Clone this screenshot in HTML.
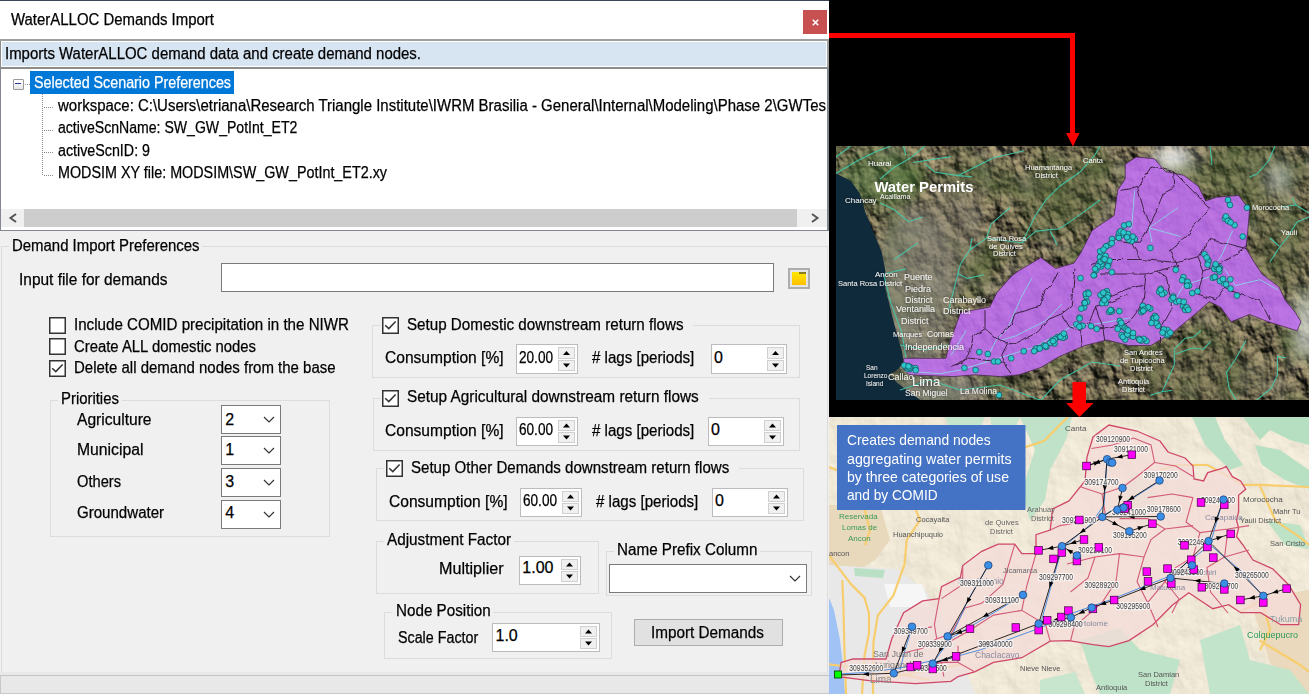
<!DOCTYPE html>
<html><head><meta charset="utf-8"><style>
html,body{margin:0;padding:0;width:1309px;height:694px;overflow:hidden;background:#000;}
body{position:relative;font-family:"Liberation Sans",sans-serif;}
.t{position:absolute;white-space:nowrap;transform-origin:0 0;-webkit-text-stroke:0.25px currentColor;}
</style></head><body>
<div id="dlg" style="position:absolute;left:0;top:0;width:829px;height:694px;overflow:hidden">
<div style="position:absolute;left:0px;top:0px;width:829px;height:694px;background:#f0f0f0"></div>
<div style="position:absolute;left:0px;top:0px;width:829px;height:39px;background:#fff"></div>
<div style="position:absolute;left:0px;top:0px;width:829px;height:1px;background:#3a4656"></div>
<div style="position:absolute;left:803px;top:10px;width:24px;height:24px;background:#c75050"></div>
<svg style="position:absolute;left:811px;top:18px" width="9" height="9"><path d="M1.8 1.8 L7.2 7.2 M7.2 1.8 L1.8 7.2" stroke="#fff" stroke-width="1.6"/></svg>
<div style="position:absolute;left:0px;top:39px;width:829px;height:2px;background:#a0a0a0"></div>
<div style="position:absolute;left:0px;top:67px;width:829px;height:2px;background:#8c8c8c"></div>
<div style="position:absolute;left:0px;top:41px;width:1px;height:26px;background:#8c8c8c"></div>
<div style="position:absolute;left:827px;top:41px;width:2px;height:26px;background:#a0a0a0"></div>
<div style="position:absolute;left:1px;top:41px;width:826px;height:26px;background:#fff"></div>
<div style="position:absolute;left:2px;top:42px;width:824px;height:24px;background:#d7e4f2"></div>
<div style="position:absolute;left:0px;top:69px;width:1px;height:162px;background:#828790"></div>
<div style="position:absolute;left:827px;top:69px;width:2px;height:162px;background:#828790"></div>
<div style="position:absolute;left:0px;top:230px;width:829px;height:1px;background:#828790"></div>
<div style="position:absolute;left:1px;top:69px;width:826px;height:161px;background:#fff"></div>
<div style="position:absolute;left:13px;top:79px;width:9px;height:9px;border:1px solid #999;background:linear-gradient(#fff,#e6e6e6);border-radius:1px"></div>
<div style="position:absolute;left:15px;top:83px;width:6px;height:1px;background:#2b3990"></div>
<div style="position:absolute;left:25px;top:84px;width:5px;height:1px;background-image:linear-gradient(90deg,#888 50%,transparent 50%);background-size:2px 1px"></div>
<div style="position:absolute;left:30px;top:71px;width:204px;height:23px;background:#0078d7"></div>
<div style="position:absolute;left:42px;top:94px;width:1px;height:82px;background-image:linear-gradient(#888 50%,transparent 50%);background-size:1px 2px"></div>
<div style="position:absolute;left:44px;top:107px;width:10px;height:1px;background-image:linear-gradient(90deg,#888 50%,transparent 50%);background-size:2px 1px"></div>
<div style="position:absolute;left:44px;top:130px;width:10px;height:1px;background-image:linear-gradient(90deg,#888 50%,transparent 50%);background-size:2px 1px"></div>
<div style="position:absolute;left:44px;top:152px;width:10px;height:1px;background-image:linear-gradient(90deg,#888 50%,transparent 50%);background-size:2px 1px"></div>
<div style="position:absolute;left:44px;top:175px;width:10px;height:1px;background-image:linear-gradient(90deg,#888 50%,transparent 50%);background-size:2px 1px"></div>
<div style="position:absolute;left:1px;top:209px;width:826px;height:18px;background:#f0f0f0"></div>
<div style="position:absolute;left:24px;top:209px;width:773px;height:18px;background:#cdcdcd"></div>
<svg style="position:absolute;left:0;top:0;overflow:visible" width="1" height="1"><path d="M16 214 L10.5 218 L16 222 M812 214 L817.5 218 L812 222" fill="none" stroke="#555" stroke-width="2"/></svg>
<div style="position:absolute;left:1px;top:246px;width:1px;height:427px;background:#dcdcdc"></div>
<div style="position:absolute;left:827px;top:246px;width:1px;height:427px;background:#dcdcdc"></div>
<div style="position:absolute;left:1px;top:672px;width:827px;height:1px;background:#dcdcdc"></div>
<div style="position:absolute;left:1px;top:246px;width:8px;height:1px;background:#dcdcdc"></div>
<div style="position:absolute;left:202px;top:246px;width:626px;height:1px;background:#dcdcdc"></div>
<div style="position:absolute;left:221px;top:263px;width:551px;height:27px;border:1px solid #7a7a7a;background:#fff"></div>
<div style="position:absolute;left:788px;top:268px;width:18px;height:17px;border:2px solid #adadad;background:#e5e5e5"></div>
<div style="position:absolute;left:792px;top:272px;width:14px;height:13px;background:linear-gradient(#ffe800,#ffc000)"></div>
<div style="position:absolute;left:799px;top:272px;width:7px;height:2px;background:#8a7a20"></div>
<svg style="position:absolute;left:49px;top:317px" width="17" height="17"><rect x="0.75" y="0.75" width="15.5" height="15.5" fill="#fff" stroke="#333" stroke-width="1.5"/></svg>
<svg style="position:absolute;left:49px;top:338px" width="17" height="17"><rect x="0.75" y="0.75" width="15.5" height="15.5" fill="#fff" stroke="#333" stroke-width="1.5"/></svg>
<svg style="position:absolute;left:49px;top:360px" width="17" height="17"><rect x="0.75" y="0.75" width="15.5" height="15.5" fill="#fff" stroke="#333" stroke-width="1.5"/><path d="M3.2 8.2 L6.8 11.6 L13.6 4.4" fill="none" stroke="#333" stroke-width="1.5"/></svg>
<div style="position:absolute;left:50px;top:400px;width:1px;height:137px;background:#dcdcdc"></div>
<div style="position:absolute;left:329px;top:400px;width:1px;height:137px;background:#dcdcdc"></div>
<div style="position:absolute;left:50px;top:536px;width:280px;height:1px;background:#dcdcdc"></div>
<div style="position:absolute;left:50px;top:400px;width:8px;height:1px;background:#dcdcdc"></div>
<div style="position:absolute;left:122px;top:400px;width:208px;height:1px;background:#dcdcdc"></div>
<div style="position:absolute;left:221px;top:405px;width:58px;height:27px;border:1px solid #7a7a7a;background:#fff"></div>
<svg style="position:absolute;left:0;top:0;overflow:visible" width="1" height="1"><path d="M264 417.0 L269 422.0 L274 417.0" fill="none" stroke="#333" stroke-width="1.2"/></svg>
<div style="position:absolute;left:221px;top:436px;width:58px;height:27px;border:1px solid #7a7a7a;background:#fff"></div>
<svg style="position:absolute;left:0;top:0;overflow:visible" width="1" height="1"><path d="M264 448.0 L269 453.0 L274 448.0" fill="none" stroke="#333" stroke-width="1.2"/></svg>
<div style="position:absolute;left:221px;top:468px;width:58px;height:27px;border:1px solid #7a7a7a;background:#fff"></div>
<svg style="position:absolute;left:0;top:0;overflow:visible" width="1" height="1"><path d="M264 480.0 L269 485.0 L274 480.0" fill="none" stroke="#333" stroke-width="1.2"/></svg>
<div style="position:absolute;left:221px;top:500px;width:58px;height:27px;border:1px solid #7a7a7a;background:#fff"></div>
<svg style="position:absolute;left:0;top:0;overflow:visible" width="1" height="1"><path d="M264 512.0 L269 517.0 L274 512.0" fill="none" stroke="#333" stroke-width="1.2"/></svg>
<div style="position:absolute;left:372px;top:325px;width:1px;height:53px;background:#dcdcdc"></div>
<div style="position:absolute;left:799px;top:325px;width:1px;height:53px;background:#dcdcdc"></div>
<div style="position:absolute;left:372px;top:377px;width:428px;height:1px;background:#dcdcdc"></div>
<div style="position:absolute;left:372px;top:325px;width:8px;height:1px;background:#dcdcdc"></div>
<div style="position:absolute;left:693px;top:325px;width:107px;height:1px;background:#dcdcdc"></div>
<svg style="position:absolute;left:382px;top:317px" width="17" height="17"><rect x="0.75" y="0.75" width="15.5" height="15.5" fill="#fff" stroke="#333" stroke-width="1.5"/><path d="M3.2 8.2 L6.8 11.6 L13.6 4.4" fill="none" stroke="#333" stroke-width="1.5"/></svg>
<div style="position:absolute;left:516px;top:344px;width:60px;height:28px;border:1px solid #bcbcc0;background:#fff"></div>
<div style="position:absolute;left:558px;top:347px;width:15px;height:10px;border:1px solid #d0d0d0;background:#f0f0f0"></div>
<div style="position:absolute;left:558px;top:360px;width:15px;height:9px;border:1px solid #d0d0d0;background:#f0f0f0"></div>
<svg style="position:absolute;left:0;top:0;overflow:visible" width="1" height="1"><path d="M563.0 355.0 L570.0 355.0 L566.5 351.0 Z M563.0 363.5 L570.0 363.5 L566.5 367.5 Z" fill="#000"/></svg>
<div style="position:absolute;left:711px;top:344px;width:74px;height:28px;border:1px solid #bcbcc0;background:#fff"></div>
<div style="position:absolute;left:767px;top:347px;width:15px;height:10px;border:1px solid #d0d0d0;background:#f0f0f0"></div>
<div style="position:absolute;left:767px;top:360px;width:15px;height:9px;border:1px solid #d0d0d0;background:#f0f0f0"></div>
<svg style="position:absolute;left:0;top:0;overflow:visible" width="1" height="1"><path d="M772.0 355.0 L779.0 355.0 L775.5 351.0 Z M772.0 363.5 L779.0 363.5 L775.5 367.5 Z" fill="#000"/></svg>
<div style="position:absolute;left:373px;top:398px;width:1px;height:53px;background:#dcdcdc"></div>
<div style="position:absolute;left:799px;top:398px;width:1px;height:53px;background:#dcdcdc"></div>
<div style="position:absolute;left:373px;top:450px;width:427px;height:1px;background:#dcdcdc"></div>
<div style="position:absolute;left:373px;top:398px;width:8px;height:1px;background:#dcdcdc"></div>
<div style="position:absolute;left:709px;top:398px;width:91px;height:1px;background:#dcdcdc"></div>
<svg style="position:absolute;left:382px;top:390px" width="17" height="17"><rect x="0.75" y="0.75" width="15.5" height="15.5" fill="#fff" stroke="#333" stroke-width="1.5"/><path d="M3.2 8.2 L6.8 11.6 L13.6 4.4" fill="none" stroke="#333" stroke-width="1.5"/></svg>
<div style="position:absolute;left:516px;top:417px;width:60px;height:27px;border:1px solid #bcbcc0;background:#fff"></div>
<div style="position:absolute;left:558px;top:420px;width:15px;height:9px;border:1px solid #d0d0d0;background:#f0f0f0"></div>
<div style="position:absolute;left:558px;top:432px;width:15px;height:9px;border:1px solid #d0d0d0;background:#f0f0f0"></div>
<svg style="position:absolute;left:0;top:0;overflow:visible" width="1" height="1"><path d="M563.0 427.5 L570.0 427.5 L566.5 423.5 Z M563.0 435.5 L570.0 435.5 L566.5 439.5 Z" fill="#000"/></svg>
<div style="position:absolute;left:708px;top:417px;width:74px;height:27px;border:1px solid #bcbcc0;background:#fff"></div>
<div style="position:absolute;left:764px;top:420px;width:15px;height:9px;border:1px solid #d0d0d0;background:#f0f0f0"></div>
<div style="position:absolute;left:764px;top:432px;width:15px;height:9px;border:1px solid #d0d0d0;background:#f0f0f0"></div>
<svg style="position:absolute;left:0;top:0;overflow:visible" width="1" height="1"><path d="M769.0 427.5 L776.0 427.5 L772.5 423.5 Z M769.0 435.5 L776.0 435.5 L772.5 439.5 Z" fill="#000"/></svg>
<div style="position:absolute;left:376px;top:468px;width:1px;height:53px;background:#dcdcdc"></div>
<div style="position:absolute;left:803px;top:468px;width:1px;height:53px;background:#dcdcdc"></div>
<div style="position:absolute;left:376px;top:520px;width:428px;height:1px;background:#dcdcdc"></div>
<div style="position:absolute;left:376px;top:468px;width:8px;height:1px;background:#dcdcdc"></div>
<div style="position:absolute;left:739px;top:468px;width:65px;height:1px;background:#dcdcdc"></div>
<svg style="position:absolute;left:386px;top:460px" width="17" height="17"><rect x="0.75" y="0.75" width="15.5" height="15.5" fill="#fff" stroke="#333" stroke-width="1.5"/><path d="M3.2 8.2 L6.8 11.6 L13.6 4.4" fill="none" stroke="#333" stroke-width="1.5"/></svg>
<div style="position:absolute;left:520px;top:488px;width:60px;height:27px;border:1px solid #bcbcc0;background:#fff"></div>
<div style="position:absolute;left:562px;top:491px;width:15px;height:9px;border:1px solid #d0d0d0;background:#f0f0f0"></div>
<div style="position:absolute;left:562px;top:503px;width:15px;height:9px;border:1px solid #d0d0d0;background:#f0f0f0"></div>
<svg style="position:absolute;left:0;top:0;overflow:visible" width="1" height="1"><path d="M567.0 498.5 L574.0 498.5 L570.5 494.5 Z M567.0 506.5 L574.0 506.5 L570.5 510.5 Z" fill="#000"/></svg>
<div style="position:absolute;left:712px;top:488px;width:74px;height:27px;border:1px solid #bcbcc0;background:#fff"></div>
<div style="position:absolute;left:768px;top:491px;width:15px;height:9px;border:1px solid #d0d0d0;background:#f0f0f0"></div>
<div style="position:absolute;left:768px;top:503px;width:15px;height:9px;border:1px solid #d0d0d0;background:#f0f0f0"></div>
<svg style="position:absolute;left:0;top:0;overflow:visible" width="1" height="1"><path d="M773.0 498.5 L780.0 498.5 L776.5 494.5 Z M773.0 506.5 L780.0 506.5 L776.5 510.5 Z" fill="#000"/></svg>
<div style="position:absolute;left:376px;top:541px;width:1px;height:53px;background:#dcdcdc"></div>
<div style="position:absolute;left:598px;top:541px;width:1px;height:53px;background:#dcdcdc"></div>
<div style="position:absolute;left:376px;top:593px;width:223px;height:1px;background:#dcdcdc"></div>
<div style="position:absolute;left:376px;top:541px;width:8px;height:1px;background:#dcdcdc"></div>
<div style="position:absolute;left:514px;top:541px;width:85px;height:1px;background:#dcdcdc"></div>
<div style="position:absolute;left:519px;top:556px;width:60px;height:27px;border:1px solid #bcbcc0;background:#fff"></div>
<div style="position:absolute;left:561px;top:559px;width:15px;height:9px;border:1px solid #d0d0d0;background:#f0f0f0"></div>
<div style="position:absolute;left:561px;top:571px;width:15px;height:9px;border:1px solid #d0d0d0;background:#f0f0f0"></div>
<svg style="position:absolute;left:0;top:0;overflow:visible" width="1" height="1"><path d="M566.0 566.5 L573.0 566.5 L569.5 562.5 Z M566.0 574.5 L573.0 574.5 L569.5 578.5 Z" fill="#000"/></svg>
<div style="position:absolute;left:606px;top:551px;width:1px;height:45px;background:#dcdcdc"></div>
<div style="position:absolute;left:811px;top:551px;width:1px;height:45px;background:#dcdcdc"></div>
<div style="position:absolute;left:606px;top:595px;width:206px;height:1px;background:#dcdcdc"></div>
<div style="position:absolute;left:606px;top:551px;width:8px;height:1px;background:#dcdcdc"></div>
<div style="position:absolute;left:760px;top:551px;width:52px;height:1px;background:#dcdcdc"></div>
<div style="position:absolute;left:609px;top:564px;width:196px;height:27px;border:1px solid #7a7a7a;background:#fff"></div>
<svg style="position:absolute;left:0;top:0;overflow:visible" width="1" height="1"><path d="M790 576.0 L795 581.0 L800 576.0" fill="none" stroke="#333" stroke-width="1.2"/></svg>
<div style="position:absolute;left:384px;top:612px;width:1px;height:47px;background:#dcdcdc"></div>
<div style="position:absolute;left:611px;top:612px;width:1px;height:47px;background:#dcdcdc"></div>
<div style="position:absolute;left:384px;top:658px;width:228px;height:1px;background:#dcdcdc"></div>
<div style="position:absolute;left:384px;top:612px;width:8px;height:1px;background:#dcdcdc"></div>
<div style="position:absolute;left:493px;top:612px;width:119px;height:1px;background:#dcdcdc"></div>
<div style="position:absolute;left:492px;top:623px;width:106px;height:27px;border:1px solid #bcbcc0;background:#fff"></div>
<div style="position:absolute;left:580px;top:626px;width:15px;height:9px;border:1px solid #d0d0d0;background:#f0f0f0"></div>
<div style="position:absolute;left:580px;top:638px;width:15px;height:9px;border:1px solid #d0d0d0;background:#f0f0f0"></div>
<svg style="position:absolute;left:0;top:0;overflow:visible" width="1" height="1"><path d="M585.0 633.5 L592.0 633.5 L588.5 629.5 Z M585.0 641.5 L592.0 641.5 L588.5 645.5 Z" fill="#000"/></svg>
<div style="position:absolute;left:634px;top:619px;width:147px;height:25px;border:1px solid #adadad;background:#e1e1e1"></div>
<div style="position:absolute;left:0px;top:672px;width:829px;height:3px;background:#e8e8e8"></div>
<div style="position:absolute;left:0px;top:675px;width:829px;height:1px;background:#c4c4c4"></div>
<div style="position:absolute;left:0px;top:676px;width:829px;height:18px;background:#e8e8e8"></div>
<div style="position:absolute;left:0px;top:693px;width:829px;height:1px;background:#c8c8c8"></div>
<div style="position:absolute;left:0px;top:675px;width:1px;height:19px;background:#c8c8c8"></div>
<div class="t" style="left:10.6px;top:11.4px;font-size:16px;line-height:18px;color:#000;transform:scaleX(0.9343);">WaterALLOC Demands Import</div>
<div class="t" style="left:4.7px;top:44.7px;font-size:16px;line-height:18px;color:#000;transform:scaleX(0.9348);">Imports WaterALLOC demand data and create demand nodes.</div>
<div class="t" style="left:34.0px;top:74.0px;font-size:16px;line-height:18px;color:#fff;transform:scaleX(0.8931);">Selected Scenario Preferences</div>
<div class="t" style="left:57.7px;top:96.7px;font-size:16px;line-height:18px;color:#000;transform:scaleX(0.9367);">workspace: C:\Users\etriana\Research Triangle Institute\IWRM Brasilia - General\Internal\Modeling\Phase 2\GWTes</div>
<div class="t" style="left:57.7px;top:119.2px;font-size:16px;line-height:18px;color:#000;transform:scaleX(0.8798);">activeScnName: SW_GW_PotInt_ET2</div>
<div class="t" style="left:57.7px;top:141.8px;font-size:16px;line-height:18px;color:#000;transform:scaleX(0.8919);">activeScnID: 9</div>
<div class="t" style="left:57.7px;top:164.4px;font-size:16px;line-height:18px;color:#000;transform:scaleX(0.8967);">MODSIM XY file: MODSIM\SW_GW_PotInt_ET2.xy</div>
<div class="t" style="left:11.9px;top:237.2px;font-size:16px;line-height:18px;color:#000;transform:scaleX(0.9334);">Demand Import Preferences</div>
<div class="t" style="left:19.3px;top:270.5px;font-size:16px;line-height:18px;color:#000;transform:scaleX(0.9651);">Input file for demands</div>
<div class="t" style="left:74.2px;top:316.2px;font-size:16px;line-height:18px;color:#000;transform:scaleX(0.9457);">Include COMID precipitation in the NIWR</div>
<div class="t" style="left:74.2px;top:337.8px;font-size:16px;line-height:18px;color:#000;transform:scaleX(0.9287);">Create ALL domestic nodes</div>
<div class="t" style="left:74.2px;top:359.2px;font-size:16px;line-height:18px;color:#000;transform:scaleX(0.9367);">Delete all demand nodes from the base</div>
<div class="t" style="left:61.1px;top:389.5px;font-size:16px;line-height:18px;color:#000;transform:scaleX(0.9304);">Priorities</div>
<div class="t" style="left:76.7px;top:410.6px;font-size:16px;line-height:18px;color:#000;transform:scaleX(0.9741);">Agriculture</div>
<div class="t" style="left:225.2px;top:410.6px;font-size:16px;line-height:18px;color:#000;">2</div>
<div class="t" style="left:76.7px;top:441.1px;font-size:16px;line-height:18px;color:#000;transform:scaleX(0.9823);">Municipal</div>
<div class="t" style="left:225.2px;top:441.1px;font-size:16px;line-height:18px;color:#000;">1</div>
<div class="t" style="left:76.7px;top:472.5px;font-size:16px;line-height:18px;color:#000;transform:scaleX(0.9164);">Others</div>
<div class="t" style="left:225.2px;top:472.5px;font-size:16px;line-height:18px;color:#000;">3</div>
<div class="t" style="left:76.7px;top:504.1px;font-size:16px;line-height:18px;color:#000;transform:scaleX(0.9416);">Groundwater</div>
<div class="t" style="left:225.2px;top:504.1px;font-size:16px;line-height:18px;color:#000;">4</div>
<div class="t" style="left:407.2px;top:315.9px;font-size:16px;line-height:18px;color:#000;transform:scaleX(0.9483);">Setup Domestic downstream return flows</div>
<div class="t" style="left:384.7px;top:349.2px;font-size:16px;line-height:18px;color:#000;transform:scaleX(0.9734);">Consumption [%]</div>
<div class="t" style="left:519.0px;top:348.6px;font-size:16px;line-height:18px;color:#000;transform:scaleX(0.8490);">20.00</div>
<div class="t" style="left:591.5px;top:349.2px;font-size:16px;line-height:18px;color:#000;transform:scaleX(0.9427);"># lags [periods]</div>
<div class="t" style="left:714.0px;top:348.6px;font-size:16px;line-height:18px;color:#000;">0</div>
<div class="t" style="left:407.2px;top:388.4px;font-size:16px;line-height:18px;color:#000;transform:scaleX(0.9591);">Setup Agricultural downstream return flows</div>
<div class="t" style="left:384.7px;top:421.7px;font-size:16px;line-height:18px;color:#000;transform:scaleX(0.9734);">Consumption [%]</div>
<div class="t" style="left:519.0px;top:421.1px;font-size:16px;line-height:18px;color:#000;transform:scaleX(0.8490);">60.00</div>
<div class="t" style="left:591.5px;top:421.7px;font-size:16px;line-height:18px;color:#000;transform:scaleX(0.9427);"># lags [periods]</div>
<div class="t" style="left:711.0px;top:421.1px;font-size:16px;line-height:18px;color:#000;">0</div>
<div class="t" style="left:411.2px;top:459.4px;font-size:16px;line-height:18px;color:#000;transform:scaleX(0.9416);">Setup Other Demands downstream return flows</div>
<div class="t" style="left:388.7px;top:492.7px;font-size:16px;line-height:18px;color:#000;transform:scaleX(0.9734);">Consumption [%]</div>
<div class="t" style="left:523.0px;top:492.1px;font-size:16px;line-height:18px;color:#000;transform:scaleX(0.8490);">60.00</div>
<div class="t" style="left:595.5px;top:492.7px;font-size:16px;line-height:18px;color:#000;transform:scaleX(0.9427);"># lags [periods]</div>
<div class="t" style="left:715.0px;top:492.1px;font-size:16px;line-height:18px;color:#000;">0</div>
<div class="t" style="left:387.2px;top:531.4px;font-size:16px;line-height:18px;color:#000;transform:scaleX(0.9551);">Adjustment Factor</div>
<div class="t" style="left:439.0px;top:559.6px;font-size:16px;line-height:18px;color:#000;transform:scaleX(1.0091);">Multiplier</div>
<div class="t" style="left:522.3px;top:559.2px;font-size:16px;line-height:18px;color:#000;">1.00</div>
<div class="t" style="left:617.1px;top:540.9px;font-size:16px;line-height:18px;color:#000;transform:scaleX(0.9512);">Name Prefix Column</div>
<div class="t" style="left:395.8px;top:602.4px;font-size:16px;line-height:18px;color:#000;transform:scaleX(0.9506);">Node Position</div>
<div class="t" style="left:398.2px;top:629.2px;font-size:16px;line-height:18px;color:#000;transform:scaleX(0.8930);">Scale Factor</div>
<div class="t" style="left:495.5px;top:626.6px;font-size:16px;line-height:18px;color:#000;">1.0</div>
<div class="t" style="left:651.2px;top:623.8px;font-size:16px;line-height:18px;color:#000;transform:scaleX(0.9546);">Import Demands</div>
</div>
<svg style="position:absolute;left:0;top:0" width="1309" height="694" viewBox="0 0 1309 694">
<defs><clipPath id="ctop"><rect x="836" y="146" width="473" height="254"/></clipPath>
<clipPath id="cbot"><rect x="829" y="417" width="480" height="277"/></clipPath>
<filter id="blur6" x="-50%" y="-50%" width="200%" height="200%"><feGaussianBlur stdDeviation="8"/></filter>
<filter id="terr" x="836" y="146" width="473" height="254" filterUnits="userSpaceOnUse" color-interpolation-filters="sRGB">
<feTurbulence type="fractalNoise" baseFrequency="0.07 0.05" numOctaves="4" seed="3" result="noise"/>
<feDiffuseLighting in="noise" surfaceScale="6" diffuseConstant="1" lighting-color="#ffffff" result="lit"><feDistantLight azimuth="300" elevation="35"/></feDiffuseLighting>
<feColorMatrix in="lit" type="matrix" values="0.68 0 0 0 0.05  0.62 0 0 0 0.05  0.47 0 0 0 0.04  0 0 0 0 1"/>
</filter>
<filter id="wig" x="-5%" y="-5%" width="110%" height="110%"><feTurbulence type="fractalNoise" baseFrequency="0.1" numOctaves="2" seed="11" result="t"/><feDisplacementMap in="SourceGraphic" in2="t" scale="4" xChannelSelector="R" yChannelSelector="G"/></filter>
<filter id="gtint" x="836" y="146" width="473" height="254" filterUnits="userSpaceOnUse" color-interpolation-filters="sRGB">
<feTurbulence type="fractalNoise" baseFrequency="0.025" numOctaves="3" seed="41" result="n"/>
<feColorMatrix in="n" type="matrix" values="0 0 0 0 0.33  0 0 0 0 0.42  0 0 0 0 0.22  0 2.6 0 0 -1.15"/>
</filter>
<filter id="wtint" x="836" y="146" width="473" height="254" filterUnits="userSpaceOnUse" color-interpolation-filters="sRGB">
<feTurbulence type="fractalNoise" baseFrequency="0.03" numOctaves="3" seed="77" result="n"/>
<feColorMatrix in="n" type="matrix" values="0 0 0 0 0.62  0 0 0 0 0.62  0 0 0 0 0.58  2.4 0 0 0 -1.25"/>
</filter>
<filter id="shadow" x="-20%" y="-20%" width="140%" height="140%"><feDropShadow dx="0" dy="0" stdDeviation="0.8" flood-color="#000" flood-opacity="0.5"/></filter>
</defs>
<g clip-path="url(#ctop)">
<rect x="836" y="146" width="473" height="254" filter="url(#terr)"/>
<rect x="836" y="146" width="473" height="254" filter="url(#gtint)" opacity="0.55"/>
<rect x="836" y="146" width="473" height="254" filter="url(#wtint)" opacity="0.45"/>
<g filter="url(#blur6)"><ellipse cx="878" cy="178" rx="42" ry="28" fill="#4f7a3e" opacity="0.5"/><ellipse cx="915" cy="290" rx="40" ry="85" fill="#8e8c80" opacity="0.6"/><ellipse cx="955" cy="225" rx="28" ry="45" fill="#8a8578" opacity="0.4"/><ellipse cx="1060" cy="195" rx="45" ry="40" fill="#4e6034" opacity="0.35"/><ellipse cx="1172" cy="158" rx="20" ry="11" fill="#f0f2f2" opacity="1"/><ellipse cx="1305" cy="325" rx="9" ry="35" fill="#e0e4e0" opacity="0.9"/><ellipse cx="1250" cy="175" rx="55" ry="30" fill="#4e6634" opacity="0.45"/><ellipse cx="1279" cy="178" rx="7" ry="13" fill="#dfe3e3" opacity="0.8"/><ellipse cx="1280" cy="250" rx="30" ry="40" fill="#58683a" opacity="0.35"/><ellipse cx="935" cy="392" rx="55" ry="14" fill="#8a8a84" opacity="0.7"/><ellipse cx="1200" cy="375" rx="70" ry="25" fill="#5a6040" opacity="0.3"/></g>
<polygon points="836.0,173.4 850.6,180.8 859.8,193.6 865.3,211.9 872.6,230.2 881.7,252.1 885.4,270.4 885.4,288.7 890.9,310.7 896.4,332.6 901.9,350.9 903.7,361.9 898.2,369.2 889.0,374.7 898.2,383.8 920.2,400.0 836.0,400.0" fill="#0f2a3b"/>
<path d="M836.0 173.5 L858.0 160.6 L875.0 152.0 L890.9 146.0" fill="none" stroke="#3fcfb0" stroke-width="1.1" opacity="0.85"/>
<path d="M836.0 157.0 L850.6 146.0" fill="none" stroke="#3fcfb0" stroke-width="1.1" opacity="0.85"/>
<path d="M880.0 179.1 L894.2 167.3 L910.7 157.8 L924.9 146.0" fill="none" stroke="#3fcfb0" stroke-width="1.1" opacity="0.85"/>
<path d="M903.6 146.0 L906.0 155.5" fill="none" stroke="#3fcfb0" stroke-width="1.1" opacity="0.85"/>
<path d="M913.1 162.5 L950.9 156.6" fill="none" stroke="#3fcfb0" stroke-width="1.1" opacity="0.85"/>
<path d="M924.9 163.7 L934.4 172.0 L958.0 175.6 L972.2 176.7" fill="none" stroke="#3fcfb0" stroke-width="1.1" opacity="0.85"/>
<path d="M958.0 175.6 L974.6 167.3 L993.5 157.8 L1024.2 150.7" fill="none" stroke="#3fcfb0" stroke-width="1.1" opacity="0.85"/>
<path d="M880.0 202.7 L894.2 209.8 L908.4 221.7 L922.6 216.9" fill="none" stroke="#3fcfb0" stroke-width="1.1" opacity="0.85"/>
<path d="M948.6 310.0 L960.4 264.2 L969.8 250.0 L986.4 238.2 L991.1 224.0 L1010.0 207.5" fill="none" stroke="#3fcfb0" stroke-width="1.1" opacity="0.85"/>
<path d="M969.8 250.0 L972.0 238.0" fill="none" stroke="#3fcfb0" stroke-width="1.1" opacity="0.85"/>
<path d="M986.4 238.2 L1021.8 242.9 L1036.0 231.1 L1059.7 228.7 L1080.0 214.6 L1100.0 200.0" fill="none" stroke="#3fcfb0" stroke-width="1.1" opacity="0.85"/>
<path d="M1021.8 242.9 L1036.0 214.6 L1045.5 200.4 L1059.7 186.2 L1080.0 172.0 L1095.0 155.0 L1100.0 146.0" fill="none" stroke="#3fcfb0" stroke-width="1.1" opacity="0.85"/>
<path d="M1050.2 231.1 L1057.3 245.3" fill="none" stroke="#3fcfb0" stroke-width="1.1" opacity="0.85"/>
<path d="M958.0 273.7 L967.5 278.4 L984.0 274.8" fill="none" stroke="#3fcfb0" stroke-width="1.1" opacity="0.85"/>
<path d="M884.7 273.7 L906.0 268.9" fill="none" stroke="#3fcfb0" stroke-width="1.1" opacity="0.85"/>
<path d="M894.2 259.5 L917.8 242.9" fill="none" stroke="#3fcfb0" stroke-width="1.1" opacity="0.85"/>
<path d="M1281.0 207.0 L1296.0 205.0 L1309.0 213.0" fill="none" stroke="#3fcfb0" stroke-width="1.1" opacity="0.85"/>
<path d="M1292.0 198.0 L1296.0 205.0" fill="none" stroke="#3fcfb0" stroke-width="1.1" opacity="0.85"/>
<path d="M1309.0 217.0 L1297.0 222.0 L1288.0 236.5 L1279.0 248.0 L1270.0 262.0" fill="none" stroke="#3fcfb0" stroke-width="1.1" opacity="0.85"/>
<path d="M1270.0 238.0 L1279.0 246.0" fill="none" stroke="#3fcfb0" stroke-width="1.1" opacity="0.85"/>
<path d="M1249.5 177.0 L1257.0 174.0 L1265.0 165.0 L1269.0 160.0 L1275.0 146.0" fill="none" stroke="#3fcfb0" stroke-width="1.1" opacity="0.85"/>
<path d="M1210.0 146.0 L1212.0 165.0" fill="none" stroke="#3fcfb0" stroke-width="1.1" opacity="0.85"/>
<path d="M1041.0 400.0 L1060.0 380.0 L1092.2 362.0 L1120.0 366.0" fill="none" stroke="#3fcfb0" stroke-width="1.1" opacity="0.85"/>
<path d="M1150.0 395.3 L1162.1 391.7 L1171.9 390.4" fill="none" stroke="#3fcfb0" stroke-width="1.1" opacity="0.85"/>
<path d="M1162.1 391.7 L1174.3 364.9 L1174.3 349.2 L1185.2 338.2 L1193.7 337.0 L1201.0 330.3" fill="none" stroke="#3fcfb0" stroke-width="1.1" opacity="0.85"/>
<path d="M1175.5 354.0 L1192.5 348.0 L1203.4 349.2 L1210.7 341.3" fill="none" stroke="#3fcfb0" stroke-width="1.1" opacity="0.85"/>
<path d="M1236.2 400.0 L1229.0 388.0 L1226.5 372.2 L1235.0 360.0 L1246.0 340.6" fill="none" stroke="#3fcfb0" stroke-width="1.1" opacity="0.85"/>
<path d="M1256.9 400.0 L1271.5 388.0 L1277.5 374.7 L1277.5 356.4 L1286.0 357.7" fill="none" stroke="#3fcfb0" stroke-width="1.1" opacity="0.85"/>
<path d="M883.6 274.0 L890.9 303.4 L901.9 332.7 L906.0 358.0" fill="none" stroke="#3fcfb0" stroke-width="1.1" opacity="0.85"/>
<path d="M900.0 345.0 L925.0 350.0 L948.0 345.0" fill="none" stroke="#3fcfb0" stroke-width="1.1" opacity="0.85"/>
<path d="M900.0 390.0 L930.0 380.0 L960.0 390.0 L1000.0 385.0 L1040.0 400.0" fill="none" stroke="#3fcfb0" stroke-width="1.1" opacity="0.85"/>
<polygon points="903.7,358.3 945.8,358.3 949.5,343.7 960.5,312.5 989.7,307.0 997.0,292.4 1011.7,275.9 1019.0,270.5 1041.0,257.6 1055.6,268.6 1073.9,263.1 1081.2,252.1 1092.2,230.2 1114.2,215.5 1117.8,189.9 1125.2,178.9 1125.2,164.3 1136.1,157.0 1154.4,158.8 1165.4,171.6 1183.7,175.3 1198.4,186.3 1205.7,200.9 1216.7,197.2 1238.6,195.4 1249.6,210.1 1247.8,230.2 1246.0,248.5 1254.0,262.0 1262.0,274.0 1279.0,287.0 1285.0,300.0 1295.0,312.0 1300.9,321.7 1297.2,330.8 1267.9,321.7 1249.6,314.4 1231.3,321.7 1220.3,307.0 1209.4,301.6 1194.7,314.4 1172.7,332.7 1150.8,345.5 1128.8,345.5 1106.9,340.0 1084.9,345.5 1059.3,356.5 1041.0,367.4 1019.0,374.8 1000.7,376.6 975.1,374.8 953.1,376.6 909.2,374.8 903.7,369.3" fill="#c070f2" fill-opacity="0.88" stroke="#4a2a50" stroke-width="0.8"/>
<path d="M1031.8 278.1 L1020.6 298.7 L1007.5 328.7 L996.2 340.0 L985.0 362.4 L960.0 370.0 L940.0 373.7 L905.0 371.0" fill="none" stroke="#8fc8e8" stroke-width="1"/>
<path d="M1061.8 304.3 L1044.9 321.2 L1015.0 336.2 L1001.8 340.0" fill="none" stroke="#8fc8e8" stroke-width="1"/>
<path d="M966.2 330.6 L951.2 354.9" fill="none" stroke="#8fc8e8" stroke-width="1"/>
<path d="M985.0 362.4 L1033.7 347.4 L1071.2 326.8 L1101.1 323.1 L1130.0 318.0" fill="none" stroke="#8fc8e8" stroke-width="1"/>
<path d="M1134.6 190.4 L1131.7 227.8 L1111.5 245.1 L1100.0 251.0" fill="none" stroke="#8fc8e8" stroke-width="1"/>
<path d="M1177.8 207.7 L1149.0 227.8 L1180.7 236.5" fill="none" stroke="#8fc8e8" stroke-width="1"/>
<path d="M1149.0 227.8 L1151.9 242.2" fill="none" stroke="#8fc8e8" stroke-width="1"/>
<path d="M1232.6 230.7 L1221.0 256.7 L1215.0 265.0" fill="none" stroke="#8fc8e8" stroke-width="1"/>
<path d="M1224.0 268.2 L1235.5 285.5 L1260.0 279.7 L1278.0 290.0" fill="none" stroke="#8fc8e8" stroke-width="1"/>
<path d="M1212.0 276.0 L1183.6 285.5 L1172.0 305.0" fill="none" stroke="#8fc8e8" stroke-width="1"/>
<g filter="url(#wig)">
<path d="M985.0 310.0 L985.0 328.7 L973.7 336.2 L968.1 354.9 L962.5 362.4 L951.2 366.2" fill="none" stroke="#3d2345" stroke-width="1"/>
<path d="M985.0 328.7 L996.2 338.1 L1007.5 343.7 L1001.8 354.9 L1005.6 366.2 L1011.2 373.7" fill="none" stroke="#3d2345" stroke-width="1"/>
<path d="M1058.0 272.5 L1052.4 283.7 L1044.9 291.2 L1039.3 306.2 L1015.0 313.7 L1011.2 325.0 L996.2 338.1" fill="none" stroke="#3d2345" stroke-width="1"/>
<path d="M1074.9 268.7 L1073.0 287.5 L1071.2 306.2 L1061.8 313.7 L1048.7 319.3 L1037.4 332.4 L1015.0 343.7 L1007.5 343.7" fill="none" stroke="#3d2345" stroke-width="1"/>
<path d="M1061.8 313.7 L1069.3 326.8 L1080.5 330.6 L1082.4 345.6" fill="none" stroke="#3d2345" stroke-width="1"/>
<path d="M1080.5 330.6 L1089.9 321.2 L1095.5 306.2 L1108.6 302.5 L1127.4 295.0" fill="none" stroke="#3d2345" stroke-width="1"/>
<path d="M1095.5 306.2 L1103.0 328.7 L1104.9 341.8" fill="none" stroke="#3d2345" stroke-width="1"/>
<path d="M951.2 366.2 L968.0 358.0 L1003.7 362.4" fill="none" stroke="#3d2345" stroke-width="1"/>
<path d="M1151.9 165.9 L1137.5 187.5 L1121.6 190.4" fill="none" stroke="#3d2345" stroke-width="1"/>
<path d="M1137.5 187.5 L1143.2 207.7 L1150.4 225.0 L1140.4 242.2 L1131.7 242.2 L1114.0 240.0" fill="none" stroke="#3d2345" stroke-width="1"/>
<path d="M1151.9 165.9 L1173.5 171.6 L1175.0 187.5 L1163.4 193.2 L1150.4 225.0" fill="none" stroke="#3d2345" stroke-width="1"/>
<path d="M1173.5 171.6 L1192.2 190.4 L1209.5 207.7" fill="none" stroke="#3d2345" stroke-width="1"/>
<path d="M1209.5 207.7 L1195.1 225.0 L1186.5 236.5 L1169.2 250.9 L1177.8 265.3" fill="none" stroke="#3d2345" stroke-width="1"/>
<path d="M1131.7 242.2 L1140.4 259.5 L1105.8 259.5 L1090.0 265.0" fill="none" stroke="#3d2345" stroke-width="1"/>
<path d="M1140.4 259.5 L1177.8 262.4 L1198.0 256.7 L1209.5 239.4 L1246.0 248.5" fill="none" stroke="#3d2345" stroke-width="1"/>
<path d="M1100.0 274.0 L1146.1 274.0 L1157.7 271.1 L1177.8 265.3" fill="none" stroke="#3d2345" stroke-width="1"/>
<path d="M1146.1 274.0 L1143.2 299.9 L1137.5 311.4 L1128.8 323.0 L1100.0 328.7" fill="none" stroke="#3d2345" stroke-width="1"/>
<path d="M1100.0 299.9 L1128.8 288.4 L1143.2 285.5" fill="none" stroke="#3d2345" stroke-width="1"/>
<path d="M1157.7 271.1 L1166.3 276.8 L1172.1 308.5 L1160.5 328.7 L1160.5 345.0" fill="none" stroke="#3d2345" stroke-width="1"/>
<path d="M1198.0 256.7 L1203.8 271.1 L1198.0 294.1 L1215.3 299.9" fill="none" stroke="#3d2345" stroke-width="1"/>
<path d="M1215.3 299.9 L1224.0 288.4 L1241.2 294.1 L1260.0 299.9 L1270.0 320.0" fill="none" stroke="#3d2345" stroke-width="1"/>
<path d="M1203.8 271.1 L1218.2 265.3 L1232.6 256.7 L1247.0 245.1" fill="none" stroke="#3d2345" stroke-width="1"/>
<path d="M1108.6 302.5 L1100.0 299.9" fill="none" stroke="#3d2345" stroke-width="1"/>
</g>
<circle cx="1084.2" cy="307.3" r="2.9" fill="#2cc6cc" stroke="#134f55" stroke-width="0.7"/>
<circle cx="1087.9" cy="292.4" r="2.9" fill="#2cc6cc" stroke="#134f55" stroke-width="0.7"/>
<circle cx="1105.9" cy="246.6" r="2.9" fill="#2cc6cc" stroke="#134f55" stroke-width="0.7"/>
<circle cx="1079.5" cy="317.7" r="2.9" fill="#2cc6cc" stroke="#134f55" stroke-width="0.7"/>
<circle cx="1112.1" cy="239.1" r="2.9" fill="#2cc6cc" stroke="#134f55" stroke-width="0.7"/>
<circle cx="1109.6" cy="244.6" r="2.9" fill="#2cc6cc" stroke="#134f55" stroke-width="0.7"/>
<circle cx="1124.2" cy="225.5" r="2.9" fill="#2cc6cc" stroke="#134f55" stroke-width="0.7"/>
<circle cx="1102.3" cy="260.1" r="2.9" fill="#2cc6cc" stroke="#134f55" stroke-width="0.7"/>
<circle cx="1085.9" cy="294.9" r="2.9" fill="#2cc6cc" stroke="#134f55" stroke-width="0.7"/>
<circle cx="1086.2" cy="296.4" r="2.9" fill="#2cc6cc" stroke="#134f55" stroke-width="0.7"/>
<circle cx="1085.8" cy="293.9" r="2.9" fill="#2cc6cc" stroke="#134f55" stroke-width="0.7"/>
<circle cx="1096.3" cy="267.8" r="2.9" fill="#2cc6cc" stroke="#134f55" stroke-width="0.7"/>
<circle cx="1121.1" cy="233.6" r="2.9" fill="#2cc6cc" stroke="#134f55" stroke-width="0.7"/>
<circle cx="1087.1" cy="302.0" r="2.9" fill="#2cc6cc" stroke="#134f55" stroke-width="0.7"/>
<circle cx="1081.3" cy="308.6" r="2.9" fill="#2cc6cc" stroke="#134f55" stroke-width="0.7"/>
<circle cx="1111.8" cy="243.2" r="2.9" fill="#2cc6cc" stroke="#134f55" stroke-width="0.7"/>
<circle cx="1120.9" cy="232.8" r="2.9" fill="#2cc6cc" stroke="#134f55" stroke-width="0.7"/>
<circle cx="1103.4" cy="256.8" r="2.9" fill="#2cc6cc" stroke="#134f55" stroke-width="0.7"/>
<circle cx="1099.7" cy="262.8" r="2.9" fill="#2cc6cc" stroke="#134f55" stroke-width="0.7"/>
<circle cx="1088.7" cy="293.6" r="2.9" fill="#2cc6cc" stroke="#134f55" stroke-width="0.7"/>
<circle cx="1084.5" cy="302.7" r="2.9" fill="#2cc6cc" stroke="#134f55" stroke-width="0.7"/>
<circle cx="1106.1" cy="246.3" r="2.9" fill="#2cc6cc" stroke="#134f55" stroke-width="0.7"/>
<circle cx="1100.7" cy="264.6" r="2.9" fill="#2cc6cc" stroke="#134f55" stroke-width="0.7"/>
<circle cx="1094.1" cy="275.2" r="2.9" fill="#2cc6cc" stroke="#134f55" stroke-width="0.7"/>
<circle cx="1079.6" cy="318.5" r="2.9" fill="#2cc6cc" stroke="#134f55" stroke-width="0.7"/>
<circle cx="1101.4" cy="253.1" r="2.9" fill="#2cc6cc" stroke="#134f55" stroke-width="0.7"/>
<circle cx="1101.3" cy="266.4" r="2.9" fill="#2cc6cc" stroke="#134f55" stroke-width="0.7"/>
<circle cx="1101.9" cy="259.7" r="2.9" fill="#2cc6cc" stroke="#134f55" stroke-width="0.7"/>
<circle cx="1101.6" cy="264.2" r="2.9" fill="#2cc6cc" stroke="#134f55" stroke-width="0.7"/>
<circle cx="1096.2" cy="270.2" r="2.9" fill="#2cc6cc" stroke="#134f55" stroke-width="0.7"/>
<circle cx="1128.8" cy="224.1" r="2.9" fill="#2cc6cc" stroke="#134f55" stroke-width="0.7"/>
<circle cx="1121.1" cy="235.5" r="2.9" fill="#2cc6cc" stroke="#134f55" stroke-width="0.7"/>
<circle cx="1118.5" cy="235.7" r="2.9" fill="#2cc6cc" stroke="#134f55" stroke-width="0.7"/>
<circle cx="1093.7" cy="275.3" r="2.9" fill="#2cc6cc" stroke="#134f55" stroke-width="0.7"/>
<circle cx="1099.9" cy="257.3" r="2.9" fill="#2cc6cc" stroke="#134f55" stroke-width="0.7"/>
<circle cx="1097.8" cy="266.4" r="2.9" fill="#2cc6cc" stroke="#134f55" stroke-width="0.7"/>
<circle cx="1100.8" cy="261.5" r="2.9" fill="#2cc6cc" stroke="#134f55" stroke-width="0.7"/>
<circle cx="1095.1" cy="268.9" r="2.9" fill="#2cc6cc" stroke="#134f55" stroke-width="0.7"/>
<circle cx="1084.9" cy="302.9" r="2.9" fill="#2cc6cc" stroke="#134f55" stroke-width="0.7"/>
<circle cx="1118.8" cy="237.7" r="2.9" fill="#2cc6cc" stroke="#134f55" stroke-width="0.7"/>
<circle cx="915.4" cy="368.1" r="2.9" fill="#2cc6cc" stroke="#134f55" stroke-width="0.7"/>
<circle cx="906.2" cy="367.3" r="2.9" fill="#2cc6cc" stroke="#134f55" stroke-width="0.7"/>
<circle cx="909.9" cy="369.1" r="2.9" fill="#2cc6cc" stroke="#134f55" stroke-width="0.7"/>
<circle cx="910.4" cy="367.1" r="2.9" fill="#2cc6cc" stroke="#134f55" stroke-width="0.7"/>
<circle cx="907.9" cy="368.6" r="2.9" fill="#2cc6cc" stroke="#134f55" stroke-width="0.7"/>
<circle cx="915.7" cy="370.2" r="2.9" fill="#2cc6cc" stroke="#134f55" stroke-width="0.7"/>
<circle cx="907.5" cy="365.9" r="2.9" fill="#2cc6cc" stroke="#134f55" stroke-width="0.7"/>
<circle cx="904.1" cy="365.4" r="2.9" fill="#2cc6cc" stroke="#134f55" stroke-width="0.7"/>
<circle cx="909.4" cy="367.6" r="2.9" fill="#2cc6cc" stroke="#134f55" stroke-width="0.7"/>
<circle cx="908.5" cy="366.3" r="2.9" fill="#2cc6cc" stroke="#134f55" stroke-width="0.7"/>
<circle cx="1081.3" cy="325.6" r="2.9" fill="#2cc6cc" stroke="#134f55" stroke-width="0.7"/>
<circle cx="1091.1" cy="326.1" r="2.9" fill="#2cc6cc" stroke="#134f55" stroke-width="0.7"/>
<circle cx="1076.4" cy="324.3" r="2.9" fill="#2cc6cc" stroke="#134f55" stroke-width="0.7"/>
<circle cx="1082.6" cy="325.8" r="2.9" fill="#2cc6cc" stroke="#134f55" stroke-width="0.7"/>
<circle cx="1096.7" cy="328.8" r="2.9" fill="#2cc6cc" stroke="#134f55" stroke-width="0.7"/>
<circle cx="1079.3" cy="326.7" r="2.9" fill="#2cc6cc" stroke="#134f55" stroke-width="0.7"/>
<circle cx="1038.2" cy="348.4" r="2.9" fill="#2cc6cc" stroke="#134f55" stroke-width="0.7"/>
<circle cx="1035.2" cy="349.8" r="2.9" fill="#2cc6cc" stroke="#134f55" stroke-width="0.7"/>
<circle cx="1064.3" cy="337.0" r="2.9" fill="#2cc6cc" stroke="#134f55" stroke-width="0.7"/>
<circle cx="1039.8" cy="348.1" r="2.9" fill="#2cc6cc" stroke="#134f55" stroke-width="0.7"/>
<circle cx="1036.0" cy="348.6" r="2.9" fill="#2cc6cc" stroke="#134f55" stroke-width="0.7"/>
<circle cx="1064.8" cy="337.0" r="2.9" fill="#2cc6cc" stroke="#134f55" stroke-width="0.7"/>
<circle cx="1057.5" cy="337.1" r="2.9" fill="#2cc6cc" stroke="#134f55" stroke-width="0.7"/>
<circle cx="1054.5" cy="343.4" r="2.9" fill="#2cc6cc" stroke="#134f55" stroke-width="0.7"/>
<circle cx="1059.5" cy="337.0" r="2.9" fill="#2cc6cc" stroke="#134f55" stroke-width="0.7"/>
<circle cx="1054.8" cy="339.1" r="2.9" fill="#2cc6cc" stroke="#134f55" stroke-width="0.7"/>
<circle cx="1046.3" cy="347.0" r="2.9" fill="#2cc6cc" stroke="#134f55" stroke-width="0.7"/>
<circle cx="1061.3" cy="335.8" r="2.9" fill="#2cc6cc" stroke="#134f55" stroke-width="0.7"/>
<circle cx="1062.9" cy="337.8" r="2.9" fill="#2cc6cc" stroke="#134f55" stroke-width="0.7"/>
<circle cx="1060.6" cy="336.7" r="2.9" fill="#2cc6cc" stroke="#134f55" stroke-width="0.7"/>
<circle cx="1052.1" cy="340.5" r="2.9" fill="#2cc6cc" stroke="#134f55" stroke-width="0.7"/>
<circle cx="1044.1" cy="345.5" r="2.9" fill="#2cc6cc" stroke="#134f55" stroke-width="0.7"/>
<circle cx="1034.2" cy="351.1" r="2.9" fill="#2cc6cc" stroke="#134f55" stroke-width="0.7"/>
<circle cx="1050.2" cy="342.8" r="2.9" fill="#2cc6cc" stroke="#134f55" stroke-width="0.7"/>
<circle cx="1063.9" cy="333.6" r="2.9" fill="#2cc6cc" stroke="#134f55" stroke-width="0.7"/>
<circle cx="1039.7" cy="348.4" r="2.9" fill="#2cc6cc" stroke="#134f55" stroke-width="0.7"/>
<circle cx="1045.5" cy="346.0" r="2.9" fill="#2cc6cc" stroke="#134f55" stroke-width="0.7"/>
<circle cx="1053.1" cy="341.1" r="2.9" fill="#2cc6cc" stroke="#134f55" stroke-width="0.7"/>
<circle cx="964.4" cy="368.0" r="2.9" fill="#2cc6cc" stroke="#134f55" stroke-width="0.7"/>
<circle cx="975.6" cy="370.0" r="2.9" fill="#2cc6cc" stroke="#134f55" stroke-width="0.7"/>
<circle cx="979.3" cy="352.1" r="2.9" fill="#2cc6cc" stroke="#134f55" stroke-width="0.7"/>
<circle cx="987.8" cy="354.0" r="2.9" fill="#2cc6cc" stroke="#134f55" stroke-width="0.7"/>
<circle cx="994.0" cy="361.5" r="2.9" fill="#2cc6cc" stroke="#134f55" stroke-width="0.7"/>
<circle cx="998.0" cy="361.5" r="2.9" fill="#2cc6cc" stroke="#134f55" stroke-width="0.7"/>
<circle cx="1011.2" cy="358.3" r="2.9" fill="#2cc6cc" stroke="#134f55" stroke-width="0.7"/>
<circle cx="1023.8" cy="351.2" r="2.9" fill="#2cc6cc" stroke="#134f55" stroke-width="0.7"/>
<circle cx="1080.5" cy="278.1" r="2.9" fill="#2cc6cc" stroke="#134f55" stroke-width="0.7"/>
<circle cx="1106.8" cy="291.2" r="2.9" fill="#2cc6cc" stroke="#134f55" stroke-width="0.7"/>
<circle cx="1109.6" cy="311.8" r="2.9" fill="#2cc6cc" stroke="#134f55" stroke-width="0.7"/>
<circle cx="1247.0" cy="207.7" r="2.9" fill="#2cc6cc" stroke="#134f55" stroke-width="0.7"/>
<circle cx="1242.7" cy="236.5" r="2.9" fill="#2cc6cc" stroke="#134f55" stroke-width="0.7"/>
<circle cx="1236.9" cy="295.6" r="2.9" fill="#2cc6cc" stroke="#134f55" stroke-width="0.7"/>
<circle cx="1150.4" cy="248.0" r="2.9" fill="#2cc6cc" stroke="#134f55" stroke-width="0.7"/>
<circle cx="999.0" cy="395.0" r="2.9" fill="#2cc6cc" stroke="#134f55" stroke-width="0.7"/>
<circle cx="1228.0" cy="200.0" r="2.9" fill="#2cc6cc" stroke="#134f55" stroke-width="0.7"/>
<circle cx="1230.0" cy="205.0" r="2.9" fill="#2cc6cc" stroke="#134f55" stroke-width="0.7"/>
<circle cx="1108.3" cy="264.1" r="2.9" fill="#2cc6cc" stroke="#134f55" stroke-width="0.7"/>
<circle cx="1111.8" cy="272.2" r="2.9" fill="#2cc6cc" stroke="#134f55" stroke-width="0.7"/>
<circle cx="1100.1" cy="251.3" r="2.9" fill="#2cc6cc" stroke="#134f55" stroke-width="0.7"/>
<circle cx="1109.5" cy="260.6" r="2.9" fill="#2cc6cc" stroke="#134f55" stroke-width="0.7"/>
<circle cx="1103.6" cy="259.1" r="2.9" fill="#2cc6cc" stroke="#134f55" stroke-width="0.7"/>
<circle cx="1103.4" cy="259.5" r="2.9" fill="#2cc6cc" stroke="#134f55" stroke-width="0.7"/>
<circle cx="1105.6" cy="256.0" r="2.9" fill="#2cc6cc" stroke="#134f55" stroke-width="0.7"/>
<circle cx="1103.5" cy="249.5" r="2.9" fill="#2cc6cc" stroke="#134f55" stroke-width="0.7"/>
<circle cx="1104.6" cy="259.2" r="2.9" fill="#2cc6cc" stroke="#134f55" stroke-width="0.7"/>
<circle cx="1107.8" cy="266.3" r="2.9" fill="#2cc6cc" stroke="#134f55" stroke-width="0.7"/>
<circle cx="1134.8" cy="239.0" r="2.9" fill="#2cc6cc" stroke="#134f55" stroke-width="0.7"/>
<circle cx="1119.2" cy="232.6" r="2.9" fill="#2cc6cc" stroke="#134f55" stroke-width="0.7"/>
<circle cx="1128.0" cy="233.8" r="2.9" fill="#2cc6cc" stroke="#134f55" stroke-width="0.7"/>
<circle cx="1131.0" cy="240.6" r="2.9" fill="#2cc6cc" stroke="#134f55" stroke-width="0.7"/>
<circle cx="1131.1" cy="238.4" r="2.9" fill="#2cc6cc" stroke="#134f55" stroke-width="0.7"/>
<circle cx="1128.8" cy="237.9" r="2.9" fill="#2cc6cc" stroke="#134f55" stroke-width="0.7"/>
<circle cx="1131.7" cy="241.1" r="2.9" fill="#2cc6cc" stroke="#134f55" stroke-width="0.7"/>
<circle cx="1132.8" cy="236.6" r="2.9" fill="#2cc6cc" stroke="#134f55" stroke-width="0.7"/>
<circle cx="1120.7" cy="231.1" r="2.9" fill="#2cc6cc" stroke="#134f55" stroke-width="0.7"/>
<circle cx="1123.5" cy="232.4" r="2.9" fill="#2cc6cc" stroke="#134f55" stroke-width="0.7"/>
<circle cx="1128.4" cy="239.6" r="2.9" fill="#2cc6cc" stroke="#134f55" stroke-width="0.7"/>
<circle cx="1127.0" cy="237.2" r="2.9" fill="#2cc6cc" stroke="#134f55" stroke-width="0.7"/>
<circle cx="1109.4" cy="311.7" r="2.9" fill="#2cc6cc" stroke="#134f55" stroke-width="0.7"/>
<circle cx="1105.6" cy="297.1" r="2.9" fill="#2cc6cc" stroke="#134f55" stroke-width="0.7"/>
<circle cx="1104.9" cy="293.1" r="2.9" fill="#2cc6cc" stroke="#134f55" stroke-width="0.7"/>
<circle cx="1112.0" cy="311.3" r="2.9" fill="#2cc6cc" stroke="#134f55" stroke-width="0.7"/>
<circle cx="1119.3" cy="311.2" r="2.9" fill="#2cc6cc" stroke="#134f55" stroke-width="0.7"/>
<circle cx="1111.1" cy="310.0" r="2.9" fill="#2cc6cc" stroke="#134f55" stroke-width="0.7"/>
<circle cx="1119.0" cy="327.2" r="2.9" fill="#2cc6cc" stroke="#134f55" stroke-width="0.7"/>
<circle cx="1108.0" cy="295.1" r="2.9" fill="#2cc6cc" stroke="#134f55" stroke-width="0.7"/>
<circle cx="1103.6" cy="299.9" r="2.9" fill="#2cc6cc" stroke="#134f55" stroke-width="0.7"/>
<circle cx="1122.5" cy="335.5" r="2.9" fill="#2cc6cc" stroke="#134f55" stroke-width="0.7"/>
<circle cx="1120.2" cy="326.1" r="2.9" fill="#2cc6cc" stroke="#134f55" stroke-width="0.7"/>
<circle cx="1100.5" cy="295.0" r="2.9" fill="#2cc6cc" stroke="#134f55" stroke-width="0.7"/>
<circle cx="1121.8" cy="325.9" r="2.9" fill="#2cc6cc" stroke="#134f55" stroke-width="0.7"/>
<circle cx="1119.8" cy="320.9" r="2.9" fill="#2cc6cc" stroke="#134f55" stroke-width="0.7"/>
<circle cx="1127.2" cy="331.0" r="2.9" fill="#2cc6cc" stroke="#134f55" stroke-width="0.7"/>
<circle cx="1120.2" cy="326.1" r="2.9" fill="#2cc6cc" stroke="#134f55" stroke-width="0.7"/>
<circle cx="1121.5" cy="335.0" r="2.9" fill="#2cc6cc" stroke="#134f55" stroke-width="0.7"/>
<circle cx="1105.8" cy="303.1" r="2.9" fill="#2cc6cc" stroke="#134f55" stroke-width="0.7"/>
<circle cx="1107.5" cy="297.5" r="2.9" fill="#2cc6cc" stroke="#134f55" stroke-width="0.7"/>
<circle cx="1124.8" cy="327.8" r="2.9" fill="#2cc6cc" stroke="#134f55" stroke-width="0.7"/>
<circle cx="1125.2" cy="339.6" r="2.9" fill="#2cc6cc" stroke="#134f55" stroke-width="0.7"/>
<circle cx="1121.3" cy="322.9" r="2.9" fill="#2cc6cc" stroke="#134f55" stroke-width="0.7"/>
<circle cx="1130.7" cy="335.6" r="2.9" fill="#2cc6cc" stroke="#134f55" stroke-width="0.7"/>
<circle cx="1117.7" cy="328.9" r="2.9" fill="#2cc6cc" stroke="#134f55" stroke-width="0.7"/>
<circle cx="1126.6" cy="329.2" r="2.9" fill="#2cc6cc" stroke="#134f55" stroke-width="0.7"/>
<circle cx="1110.6" cy="310.1" r="2.9" fill="#2cc6cc" stroke="#134f55" stroke-width="0.7"/>
<circle cx="1103.3" cy="292.7" r="2.9" fill="#2cc6cc" stroke="#134f55" stroke-width="0.7"/>
<circle cx="1102.2" cy="303.2" r="2.9" fill="#2cc6cc" stroke="#134f55" stroke-width="0.7"/>
<circle cx="1104.4" cy="300.0" r="2.9" fill="#2cc6cc" stroke="#134f55" stroke-width="0.7"/>
<circle cx="1122.8" cy="336.9" r="2.9" fill="#2cc6cc" stroke="#134f55" stroke-width="0.7"/>
<circle cx="1150.3" cy="308.6" r="2.9" fill="#2cc6cc" stroke="#134f55" stroke-width="0.7"/>
<circle cx="1157.1" cy="323.4" r="2.9" fill="#2cc6cc" stroke="#134f55" stroke-width="0.7"/>
<circle cx="1166.6" cy="335.1" r="2.9" fill="#2cc6cc" stroke="#134f55" stroke-width="0.7"/>
<circle cx="1152.9" cy="318.3" r="2.9" fill="#2cc6cc" stroke="#134f55" stroke-width="0.7"/>
<circle cx="1148.2" cy="307.3" r="2.9" fill="#2cc6cc" stroke="#134f55" stroke-width="0.7"/>
<circle cx="1143.0" cy="309.9" r="2.9" fill="#2cc6cc" stroke="#134f55" stroke-width="0.7"/>
<circle cx="1155.0" cy="315.9" r="2.9" fill="#2cc6cc" stroke="#134f55" stroke-width="0.7"/>
<circle cx="1141.4" cy="312.2" r="2.9" fill="#2cc6cc" stroke="#134f55" stroke-width="0.7"/>
<circle cx="1142.8" cy="305.8" r="2.9" fill="#2cc6cc" stroke="#134f55" stroke-width="0.7"/>
<circle cx="1157.9" cy="325.7" r="2.9" fill="#2cc6cc" stroke="#134f55" stroke-width="0.7"/>
<circle cx="1155.6" cy="322.6" r="2.9" fill="#2cc6cc" stroke="#134f55" stroke-width="0.7"/>
<circle cx="1154.0" cy="318.4" r="2.9" fill="#2cc6cc" stroke="#134f55" stroke-width="0.7"/>
<circle cx="1167.3" cy="330.0" r="2.9" fill="#2cc6cc" stroke="#134f55" stroke-width="0.7"/>
<circle cx="1168.1" cy="334.3" r="2.9" fill="#2cc6cc" stroke="#134f55" stroke-width="0.7"/>
<circle cx="1163.8" cy="329.4" r="2.9" fill="#2cc6cc" stroke="#134f55" stroke-width="0.7"/>
<circle cx="1162.5" cy="332.6" r="2.9" fill="#2cc6cc" stroke="#134f55" stroke-width="0.7"/>
<circle cx="1144.4" cy="309.4" r="2.9" fill="#2cc6cc" stroke="#134f55" stroke-width="0.7"/>
<circle cx="1170.3" cy="332.6" r="2.9" fill="#2cc6cc" stroke="#134f55" stroke-width="0.7"/>
<circle cx="1142.9" cy="311.0" r="2.9" fill="#2cc6cc" stroke="#134f55" stroke-width="0.7"/>
<circle cx="1151.4" cy="323.0" r="2.9" fill="#2cc6cc" stroke="#134f55" stroke-width="0.7"/>
<circle cx="1156.3" cy="317.5" r="2.9" fill="#2cc6cc" stroke="#134f55" stroke-width="0.7"/>
<circle cx="1143.2" cy="310.8" r="2.9" fill="#2cc6cc" stroke="#134f55" stroke-width="0.7"/>
<circle cx="1173.1" cy="296.5" r="2.9" fill="#2cc6cc" stroke="#134f55" stroke-width="0.7"/>
<circle cx="1185.9" cy="308.2" r="2.9" fill="#2cc6cc" stroke="#134f55" stroke-width="0.7"/>
<circle cx="1187.7" cy="309.3" r="2.9" fill="#2cc6cc" stroke="#134f55" stroke-width="0.7"/>
<circle cx="1176.4" cy="301.8" r="2.9" fill="#2cc6cc" stroke="#134f55" stroke-width="0.7"/>
<circle cx="1183.1" cy="306.4" r="2.9" fill="#2cc6cc" stroke="#134f55" stroke-width="0.7"/>
<circle cx="1160.7" cy="288.8" r="2.9" fill="#2cc6cc" stroke="#134f55" stroke-width="0.7"/>
<circle cx="1179.2" cy="301.1" r="2.9" fill="#2cc6cc" stroke="#134f55" stroke-width="0.7"/>
<circle cx="1185.3" cy="308.1" r="2.9" fill="#2cc6cc" stroke="#134f55" stroke-width="0.7"/>
<circle cx="1159.1" cy="291.9" r="2.9" fill="#2cc6cc" stroke="#134f55" stroke-width="0.7"/>
<circle cx="1183.7" cy="301.8" r="2.9" fill="#2cc6cc" stroke="#134f55" stroke-width="0.7"/>
<circle cx="1164.5" cy="292.8" r="2.9" fill="#2cc6cc" stroke="#134f55" stroke-width="0.7"/>
<circle cx="1185.2" cy="310.0" r="2.9" fill="#2cc6cc" stroke="#134f55" stroke-width="0.7"/>
<circle cx="1186.7" cy="307.4" r="2.9" fill="#2cc6cc" stroke="#134f55" stroke-width="0.7"/>
<circle cx="1171.4" cy="299.5" r="2.9" fill="#2cc6cc" stroke="#134f55" stroke-width="0.7"/>
<circle cx="1188.3" cy="309.8" r="2.9" fill="#2cc6cc" stroke="#134f55" stroke-width="0.7"/>
<circle cx="1162.1" cy="294.2" r="2.9" fill="#2cc6cc" stroke="#134f55" stroke-width="0.7"/>
<circle cx="1160.6" cy="289.7" r="2.9" fill="#2cc6cc" stroke="#134f55" stroke-width="0.7"/>
<circle cx="1173.2" cy="297.8" r="2.9" fill="#2cc6cc" stroke="#134f55" stroke-width="0.7"/>
<circle cx="1187.3" cy="282.9" r="2.9" fill="#2cc6cc" stroke="#134f55" stroke-width="0.7"/>
<circle cx="1183.4" cy="277.1" r="2.9" fill="#2cc6cc" stroke="#134f55" stroke-width="0.7"/>
<circle cx="1187.1" cy="284.2" r="2.9" fill="#2cc6cc" stroke="#134f55" stroke-width="0.7"/>
<circle cx="1182.1" cy="280.3" r="2.9" fill="#2cc6cc" stroke="#134f55" stroke-width="0.7"/>
<circle cx="1192.2" cy="293.1" r="2.9" fill="#2cc6cc" stroke="#134f55" stroke-width="0.7"/>
<circle cx="1187.5" cy="281.8" r="2.9" fill="#2cc6cc" stroke="#134f55" stroke-width="0.7"/>
<circle cx="1189.2" cy="285.6" r="2.9" fill="#2cc6cc" stroke="#134f55" stroke-width="0.7"/>
<circle cx="1187.0" cy="285.8" r="2.9" fill="#2cc6cc" stroke="#134f55" stroke-width="0.7"/>
<circle cx="1197.5" cy="291.3" r="2.9" fill="#2cc6cc" stroke="#134f55" stroke-width="0.7"/>
<circle cx="1175.8" cy="269.7" r="2.9" fill="#2cc6cc" stroke="#134f55" stroke-width="0.7"/>
<circle cx="1214.8" cy="269.0" r="2.9" fill="#2cc6cc" stroke="#134f55" stroke-width="0.7"/>
<circle cx="1214.8" cy="266.9" r="2.9" fill="#2cc6cc" stroke="#134f55" stroke-width="0.7"/>
<circle cx="1208.3" cy="261.6" r="2.9" fill="#2cc6cc" stroke="#134f55" stroke-width="0.7"/>
<circle cx="1219.4" cy="271.5" r="2.9" fill="#2cc6cc" stroke="#134f55" stroke-width="0.7"/>
<circle cx="1208.3" cy="260.2" r="2.9" fill="#2cc6cc" stroke="#134f55" stroke-width="0.7"/>
<circle cx="1208.3" cy="261.1" r="2.9" fill="#2cc6cc" stroke="#134f55" stroke-width="0.7"/>
<circle cx="1219.8" cy="267.7" r="2.9" fill="#2cc6cc" stroke="#134f55" stroke-width="0.7"/>
<circle cx="1204.5" cy="254.2" r="2.9" fill="#2cc6cc" stroke="#134f55" stroke-width="0.7"/>
<circle cx="1206.6" cy="257.5" r="2.9" fill="#2cc6cc" stroke="#134f55" stroke-width="0.7"/>
<circle cx="1214.3" cy="268.7" r="2.9" fill="#2cc6cc" stroke="#134f55" stroke-width="0.7"/>
<circle cx="1216.9" cy="267.4" r="2.9" fill="#2cc6cc" stroke="#134f55" stroke-width="0.7"/>
<circle cx="1218.9" cy="268.7" r="2.9" fill="#2cc6cc" stroke="#134f55" stroke-width="0.7"/>
<circle cx="1230.4" cy="279.3" r="2.9" fill="#2cc6cc" stroke="#134f55" stroke-width="0.7"/>
<circle cx="1219.0" cy="269.3" r="2.9" fill="#2cc6cc" stroke="#134f55" stroke-width="0.7"/>
<circle cx="1207.6" cy="264.6" r="2.9" fill="#2cc6cc" stroke="#134f55" stroke-width="0.7"/>
<circle cx="1215.6" cy="264.2" r="2.9" fill="#2cc6cc" stroke="#134f55" stroke-width="0.7"/>
<circle cx="1223.7" cy="283.1" r="2.9" fill="#2cc6cc" stroke="#134f55" stroke-width="0.7"/>
<circle cx="1212.8" cy="277.9" r="2.9" fill="#2cc6cc" stroke="#134f55" stroke-width="0.7"/>
<circle cx="1219.9" cy="281.0" r="2.9" fill="#2cc6cc" stroke="#134f55" stroke-width="0.7"/>
<circle cx="1226.1" cy="284.4" r="2.9" fill="#2cc6cc" stroke="#134f55" stroke-width="0.7"/>
<circle cx="1215.0" cy="276.9" r="2.9" fill="#2cc6cc" stroke="#134f55" stroke-width="0.7"/>
<circle cx="1230.6" cy="288.6" r="2.9" fill="#2cc6cc" stroke="#134f55" stroke-width="0.7"/>
<circle cx="1214.7" cy="277.0" r="2.9" fill="#2cc6cc" stroke="#134f55" stroke-width="0.7"/>
<circle cx="1223.0" cy="279.0" r="2.9" fill="#2cc6cc" stroke="#134f55" stroke-width="0.7"/>
<circle cx="1228.4" cy="219.8" r="2.9" fill="#2cc6cc" stroke="#134f55" stroke-width="0.7"/>
<circle cx="1234.6" cy="225.1" r="2.9" fill="#2cc6cc" stroke="#134f55" stroke-width="0.7"/>
<circle cx="1225.0" cy="218.7" r="2.9" fill="#2cc6cc" stroke="#134f55" stroke-width="0.7"/>
<circle cx="1225.9" cy="216.4" r="2.9" fill="#2cc6cc" stroke="#134f55" stroke-width="0.7"/>
<circle cx="1227.9" cy="220.9" r="2.9" fill="#2cc6cc" stroke="#134f55" stroke-width="0.7"/>
<circle cx="1230.6" cy="222.4" r="2.9" fill="#2cc6cc" stroke="#134f55" stroke-width="0.7"/>
<circle cx="1129.5" cy="333.0" r="2.9" fill="#2cc6cc" stroke="#134f55" stroke-width="0.7"/>
<circle cx="1146.5" cy="341.1" r="2.9" fill="#2cc6cc" stroke="#134f55" stroke-width="0.7"/>
<circle cx="1143.7" cy="338.8" r="2.9" fill="#2cc6cc" stroke="#134f55" stroke-width="0.7"/>
<circle cx="1141.2" cy="340.6" r="2.9" fill="#2cc6cc" stroke="#134f55" stroke-width="0.7"/>
<circle cx="1127.3" cy="334.4" r="2.9" fill="#2cc6cc" stroke="#134f55" stroke-width="0.7"/>
<circle cx="1133.0" cy="336.8" r="2.9" fill="#2cc6cc" stroke="#134f55" stroke-width="0.7"/>
<circle cx="1138.8" cy="338.8" r="2.9" fill="#2cc6cc" stroke="#134f55" stroke-width="0.7"/>
<circle cx="1139.6" cy="339.7" r="2.9" fill="#2cc6cc" stroke="#134f55" stroke-width="0.7"/>
<circle cx="1128.0" cy="330.4" r="2.9" fill="#2cc6cc" stroke="#134f55" stroke-width="0.7"/>
<circle cx="1133.1" cy="333.0" r="2.9" fill="#2cc6cc" stroke="#134f55" stroke-width="0.7"/>
<text x="868" y="166" font-size="8" fill="#f4f4f4" font-family="Liberation Sans" filter="url(#shadow)">Huaral</text>
<text x="845" y="203" font-size="8" fill="#f4f4f4" font-family="Liberation Sans" filter="url(#shadow)">Chancay</text>
<text x="875" y="277" font-size="8" fill="#f4f4f4" font-family="Liberation Sans" filter="url(#shadow)">Ancon</text>
<text x="838" y="286" font-size="7.5" fill="#f4f4f4" font-family="Liberation Sans" filter="url(#shadow)">Santa Rosa District</text>
<text x="904" y="280" font-size="9" fill="#f4f4f4" font-family="Liberation Sans" filter="url(#shadow)">Puente</text>
<text x="905" y="292" font-size="9" fill="#f4f4f4" font-family="Liberation Sans" filter="url(#shadow)">Piedra</text>
<text x="905" y="303" font-size="9" fill="#f4f4f4" font-family="Liberation Sans" filter="url(#shadow)">District</text>
<text x="896" y="312" font-size="9" fill="#f4f4f4" font-family="Liberation Sans" filter="url(#shadow)">Ventanilla</text>
<text x="901" y="324" font-size="9" fill="#f4f4f4" font-family="Liberation Sans" filter="url(#shadow)">District</text>
<text x="943" y="303" font-size="9" fill="#f4f4f4" font-family="Liberation Sans" filter="url(#shadow)">Carabayllo</text>
<text x="943" y="314" font-size="9" fill="#f4f4f4" font-family="Liberation Sans" filter="url(#shadow)">District</text>
<text x="927" y="337" font-size="8.5" fill="#f4f4f4" font-family="Liberation Sans" filter="url(#shadow)">Comas</text>
<text x="893" y="337" font-size="7.5" fill="#f4f4f4" font-family="Liberation Sans" filter="url(#shadow)">Marques</text>
<text x="905" y="350" font-size="9" fill="#f4f4f4" font-family="Liberation Sans" filter="url(#shadow)">Independencia</text>
<text x="888" y="380" font-size="9" fill="#f4f4f4" font-family="Liberation Sans" filter="url(#shadow)">Callao</text>
<text x="912" y="386" font-size="13" fill="#f4f4f4" font-family="Liberation Sans" filter="url(#shadow)">Lima</text>
<text x="905" y="396" font-size="8.5" fill="#f4f4f4" font-family="Liberation Sans" filter="url(#shadow)">San Miguel</text>
<text x="960" y="394" font-size="8.5" fill="#f4f4f4" font-family="Liberation Sans" filter="url(#shadow)">La Molina</text>
<text x="1025" y="170" font-size="7.5" fill="#f4f4f4" font-family="Liberation Sans" filter="url(#shadow)">Huamantanga</text>
<text x="1035" y="178" font-size="7.5" fill="#f4f4f4" font-family="Liberation Sans" filter="url(#shadow)">District</text>
<text x="1083" y="163" font-size="7.5" fill="#f4f4f4" font-family="Liberation Sans" filter="url(#shadow)">Canta</text>
<text x="987" y="241" font-size="7.5" fill="#f4f4f4" font-family="Liberation Sans" filter="url(#shadow)">Santa Rosa</text>
<text x="989" y="249" font-size="7.5" fill="#f4f4f4" font-family="Liberation Sans" filter="url(#shadow)">de Quives</text>
<text x="993" y="256" font-size="7.5" fill="#f4f4f4" font-family="Liberation Sans" filter="url(#shadow)">District</text>
<text x="1124" y="355" font-size="7.5" fill="#f4f4f4" font-family="Liberation Sans" filter="url(#shadow)">San Andres</text>
<text x="1120" y="363" font-size="7.5" fill="#f4f4f4" font-family="Liberation Sans" filter="url(#shadow)">de Tupicocha</text>
<text x="1130" y="371" font-size="7.5" fill="#f4f4f4" font-family="Liberation Sans" filter="url(#shadow)">District</text>
<text x="1118" y="384" font-size="7.5" fill="#f4f4f4" font-family="Liberation Sans" filter="url(#shadow)">Antioquia</text>
<text x="1122" y="392" font-size="7.5" fill="#f4f4f4" font-family="Liberation Sans" filter="url(#shadow)">District</text>
<text x="1252" y="210" font-size="7.5" fill="#f4f4f4" font-family="Liberation Sans" filter="url(#shadow)">Morococha</text>
<text x="1281" y="235" font-size="7.5" fill="#f4f4f4" font-family="Liberation Sans" filter="url(#shadow)">Yauli</text>
<text x="866" y="370" font-size="6.5" fill="#f4f4f4" font-family="Liberation Sans" filter="url(#shadow)">San</text>
<text x="864" y="378" font-size="6.5" fill="#f4f4f4" font-family="Liberation Sans" filter="url(#shadow)">Lorenzo</text>
<text x="866" y="386" font-size="6.5" fill="#f4f4f4" font-family="Liberation Sans" filter="url(#shadow)">Island</text>
<text x="880" y="199" font-size="7" fill="#f4f4f4" font-family="Liberation Sans" filter="url(#shadow)">Acaillama</text>
<text x="874.4" y="191.7" font-size="15.2" font-weight="bold" fill="#fff" font-family="Liberation Sans" textLength="99" lengthAdjust="spacingAndGlyphs">Water Permits</text>
</g></svg>
<svg style="position:absolute;left:0;top:0" width="1309" height="694" viewBox="0 0 1309 694">
<defs><filter id="halo" x="-10%" y="-30%" width="120%" height="160%"><feMorphology in="SourceAlpha" operator="dilate" radius="0.8" result="d"/><feFlood flood-color="#fff" flood-opacity="0.85"/><feComposite in2="d" operator="in" result="w"/><feMerge><feMergeNode in="w"/><feMergeNode in="SourceGraphic"/></feMerge></filter></defs>
<g clip-path="url(#cbot)">
<defs><filter id="terr2" x="829" y="417" width="480" height="277" filterUnits="userSpaceOnUse" color-interpolation-filters="sRGB"><feTurbulence type="fractalNoise" baseFrequency="0.04 0.03" numOctaves="4" seed="21" result="noise"/><feDiffuseLighting in="noise" surfaceScale="4" diffuseConstant="1" lighting-color="#ffffff"><feDistantLight azimuth="300" elevation="50"/></feDiffuseLighting><feColorMatrix type="matrix" values="0.16 0 0 0 0.82  0.16 0 0 0 0.79  0.16 0 0 0 0.72  0 0 0 0 1"/></filter></defs>
<rect x="829" y="417" width="480" height="277" filter="url(#terr2)"/>
<path d="M829 505 L880 505 L890 540 L875 560 L850 575 L829 570 Z" fill="#e8d8bc"/>
<path d="M1250 600 L1309 590 L1309 694 L1280 694 Z" fill="#ead9bd"/>
<path d="M829 565 L860 567 L896 569 L925 590 L950 630 L975 694 L829 694 Z" fill="#e8e8e8"/>
<path d="M884 584 L922 584 L930 607 L890 607 Z" fill="#f6f6f6"/>
<path d="M1020 417 L1072 417 L1066 440 L1050 470 L1045 500 L1030 520 L1022 490 L1035 450 Z" fill="#bfe2c8"/>
<path d="M990 417 L1020 417 L1010 440 L995 445 Z" fill="#c5e5cc"/>
<path d="M1192 417 L1215 417 L1225 440 L1243 465 L1230 470 L1205 445 Z" fill="#b9e0c4"/>
<path d="M1243 417 L1309 417 L1309 445 L1290 440 L1270 430 L1260 440 Z" fill="#b5dfc0"/>
<path d="M1255 445 L1280 450 L1309 470 L1309 489 L1285 480 L1262 465 Z" fill="#b8e0c2"/>
<path d="M1267 521 L1300 525 L1309 549 L1285 545 Z" fill="#bde2c6"/>
<path d="M1080 640 L1120 628 L1140 650 L1180 660 L1170 694 L1100 694 L1090 670 Z" fill="#bfe3c8"/>
<path d="M1200 640 L1240 625 L1250 660 L1290 670 L1309 694 L1210 694 Z" fill="#c2e4ca"/>
<path d="M1040 680 L1075 672 L1085 694 L1040 694 Z" fill="#c8e6cd"/>
<path d="M945 417 L985 417 L975 440 L955 445 Z" fill="#c5e5cc"/>
<path d="M1130 470 L1150 480 L1160 520 L1140 530 L1125 500 Z" fill="#d2e4cc" opacity="0.7"/>
<path d="M1060 540 L1090 545 L1085 575 L1062 570 Z" fill="#d2e4cc" opacity="0.7"/>
<path d="M854 568 L885 570 L883 578 L855 576 Z" fill="#b9e0c4"/>
<path d="M829 598 L834 610 L840 640 L843 665 L845 694 L829 694 Z" fill="#a0c2f5"/>
<path d="M1067.9 417.0 L1044.0 441.0 L1020.0 449.0 L1005.0 470.0" fill="none" stroke="#f7cd6e" stroke-width="2.2"/>
<path d="M1160.0 470.0 L1175.7 465.0 L1207.6 465.0 L1243.5 484.9 L1259.5 484.9 L1309.0 487.0" fill="none" stroke="#f7cd6e" stroke-width="2.2"/>
<path d="M1259.5 484.9 L1275.5 520.8 L1299.4 536.8 L1309.0 545.0" fill="none" stroke="#f7cd6e" stroke-width="2.2"/>
<path d="M1259.5 640.6 L1299.4 664.5 L1309.0 672.0" fill="none" stroke="#f7cd6e" stroke-width="2.2"/>
<path d="M829.0 467.0 L850.0 475.0 L862.0 500.0 L870.0 530.0 L865.0 545.0" fill="none" stroke="#f7cd6e" stroke-width="2.2"/>
<path d="M829.0 555.5 L851.2 584.4 L864.5 597.7 L869.0 613.3 L869.0 633.2 L864.5 655.5 L862.0 694.0" fill="none" stroke="#f7cd6e" stroke-width="2.2"/>
<path d="M842.3 580.0 L843.4 606.6 L844.5 651.0 L846.0 694.0" fill="none" stroke="#f7cd6e" stroke-width="2.2"/>
<path d="M906.7 540.0 L904.5 564.4 L893.4 595.5 L877.8 615.5 L873.4 642.1 L873.0 694.0" fill="none" stroke="#f7cd6e" stroke-width="2.2"/>
<path d="M829.0 664.3 L860.0 668.0 L895.6 673.2 L930.0 680.0" fill="none" stroke="#f7cd6e" stroke-width="2.2"/>
<path d="M884.5 677.7 L920.0 672.0 L962.2 664.3" fill="none" stroke="#f7cd6e" stroke-width="2.2"/>
<path d="M912.0 500.0 L920.0 520.0 L906.7 540.0" fill="none" stroke="#f7cd6e" stroke-width="2.2"/>
<path d="M1240.0 612.0 L1262.0 600.0 L1270.0 630.0 L1260.0 650.0" fill="none" stroke="#f7cd6e" stroke-width="2.2"/>
<polygon points="1069.0,500.9 1085.0,480.9 1087.0,457.0 1093.0,437.0 1108.9,425.0 1136.9,431.0 1160.0,441.0 1168.0,452.0 1185.0,458.0 1193.0,466.0 1194.0,479.0 1203.6,480.9 1207.7,472.6 1222.1,468.5 1226.2,466.4 1232.4,476.7 1240.6,480.9 1245.8,489.1 1238.6,495.3 1238.6,511.7 1236.5,520.0 1238.6,528.2 1236.5,536.5 1242.7,544.7 1253.0,560.0 1272.7,568.8 1288.6,584.7 1300.6,604.7 1298.6,624.7 1280.7,624.7 1260.7,612.7 1240.7,612.7 1228.7,604.7 1212.8,608.7 1200.8,600.7 1188.8,592.7 1172.8,604.7 1152.9,624.7 1128.9,640.6 1108.9,646.6 1093.0,644.6 1069.0,640.6 1050.2,641.1 1021.8,657.7 993.5,662.4 974.6,671.8 958.0,676.6 950.9,681.3 915.5,683.7 868.9,680.6 839.0,676.6 841.0,662.6 853.0,659.0 886.0,659.0 891.8,638.7 903.6,612.7 922.6,600.9 939.1,598.6 941.5,586.7 960.4,577.3 962.7,565.5 981.7,551.3 998.2,544.2 1014.8,544.2 1021.8,553.6 1036.0,553.6 1036.0,534.7 1050.2,530.0 1052.6,508.9" fill="#f4dcd8" fill-opacity="0.78" stroke="#cf4868" stroke-width="1.3"/>
<path d="M1014.8 544.2 L1002.9 584.4 L981.7 603.3 L965.1 608.0 L950.9 634.0 L936.7 638.7" fill="none" stroke="#d35a78" stroke-width="1.1"/>
<path d="M939.1 598.6 L934.4 624.6 L936.7 638.7" fill="none" stroke="#d35a78" stroke-width="1.1"/>
<path d="M1036.0 553.6 L1026.6 586.7 L1021.8 610.4 L993.5 615.1 L967.5 631.7 L950.9 641.1" fill="none" stroke="#d35a78" stroke-width="1.1"/>
<path d="M1021.8 610.4 L1045.5 624.6 L1050.2 641.1" fill="none" stroke="#d35a78" stroke-width="1.1"/>
<path d="M917.8 629.3 L932.0 626.9" fill="none" stroke="#d35a78" stroke-width="1.1"/>
<path d="M903.6 653.0 L922.6 648.2 L936.7 638.7" fill="none" stroke="#d35a78" stroke-width="1.1"/>
<path d="M958.0 645.8 L958.0 662.4 L974.6 671.8" fill="none" stroke="#d35a78" stroke-width="1.1"/>
<path d="M915.5 669.5 L941.5 662.4 L958.0 662.4" fill="none" stroke="#d35a78" stroke-width="1.1"/>
<path d="M941.5 662.4 L943.8 676.6" fill="none" stroke="#d35a78" stroke-width="1.1"/>
<path d="M962.7 565.5 L962.7 584.4 L941.5 598.6" fill="none" stroke="#d35a78" stroke-width="1.1"/>
<path d="M1091.5 448.5 L1112.5 445.0 L1133.6 438.0 L1151.0 445.0 L1154.6 462.5 L1137.0 476.5 L1123.0 487.0" fill="none" stroke="#d35a78" stroke-width="1.1"/>
<path d="M1154.6 462.5 L1175.6 466.0 L1193.0 476.5" fill="none" stroke="#d35a78" stroke-width="1.1"/>
<path d="M1081.0 487.0 L1102.0 494.0 L1123.0 487.0" fill="none" stroke="#d35a78" stroke-width="1.1"/>
<path d="M1102.0 494.0 L1105.5 515.0" fill="none" stroke="#d35a78" stroke-width="1.1"/>
<path d="M1147.6 497.6 L1172.0 494.0 L1193.0 497.6" fill="none" stroke="#d35a78" stroke-width="1.1"/>
<path d="M1119.5 518.6 L1147.6 518.6 L1165.0 529.0 L1193.0 525.6" fill="none" stroke="#d35a78" stroke-width="1.1"/>
<path d="M1060.0 525.6 L1081.0 522.0 L1105.5 515.0" fill="none" stroke="#d35a78" stroke-width="1.1"/>
<path d="M1067.0 564.0 L1095.0 557.0 L1119.5 553.6 L1144.0 557.0 L1151.0 539.6 L1165.0 529.0" fill="none" stroke="#d35a78" stroke-width="1.1"/>
<path d="M1095.0 557.0 L1088.0 578.0 L1070.5 592.0" fill="none" stroke="#d35a78" stroke-width="1.1"/>
<path d="M1119.5 553.6 L1116.0 581.6 L1102.0 602.6" fill="none" stroke="#d35a78" stroke-width="1.1"/>
<path d="M1144.0 557.0 L1137.0 581.6 L1147.6 602.6 L1158.0 627.0" fill="none" stroke="#d35a78" stroke-width="1.1"/>
<path d="M1102.0 602.6 L1074.0 627.0 L1070.5 641.0" fill="none" stroke="#d35a78" stroke-width="1.1"/>
<path d="M1193.0 497.6 L1186.0 522.0 L1200.0 532.6 L1228.0 529.0 L1249.0 525.6" fill="none" stroke="#d35a78" stroke-width="1.1"/>
<path d="M1200.0 532.6 L1193.0 557.0 L1175.6 567.6 L1165.0 581.6 L1179.0 599.0 L1172.0 613.0" fill="none" stroke="#d35a78" stroke-width="1.1"/>
<path d="M1228.0 529.0 L1224.6 557.0 L1207.0 567.6 L1210.6 592.0 L1228.0 613.0" fill="none" stroke="#d35a78" stroke-width="1.1"/>
<path d="M1224.6 557.0 L1249.0 550.0" fill="none" stroke="#d35a78" stroke-width="1.1"/>
<path d="M1147.6 602.6 L1165.0 581.6" fill="none" stroke="#d35a78" stroke-width="1.1"/>
<path d="M1050.2 530.0 L1060.0 525.6" fill="none" stroke="#d35a78" stroke-width="1.1"/>
<path d="M841.0 674.0 L870.0 672.0 L900.0 668.0 L935.0 660.0 L950.0 640.0 L968.0 600.0 L988.0 566.0" fill="none" stroke="#4f8ee0" stroke-width="1"/>
<path d="M948.0 640.0 L990.0 615.0 L1023.0 595.0" fill="none" stroke="#4f8ee0" stroke-width="1"/>
<path d="M935.0 662.0 L980.0 650.0 L1040.0 628.0 L1070.0 614.0 L1110.0 600.0 L1170.0 576.0 L1210.0 545.0 L1220.0 510.0 L1223.0 500.0" fill="none" stroke="#4f8ee0" stroke-width="1"/>
<path d="M1040.0 626.0 L1050.0 590.0 L1062.0 548.0 L1090.0 525.0 L1104.0 505.0 L1107.0 460.0" fill="none" stroke="#4f8ee0" stroke-width="1"/>
<path d="M1104.0 515.0 L1130.0 500.0 L1160.0 481.0" fill="none" stroke="#4f8ee0" stroke-width="1"/>
<path d="M1210.0 545.0 L1240.0 570.0 L1263.0 596.0" fill="none" stroke="#4f8ee0" stroke-width="1"/>
<path d="M912.0 628.0 L905.0 650.0 L900.0 670.0" fill="none" stroke="#4f8ee0" stroke-width="1"/>
<text x="1065" y="431" font-size="8" fill="#555" font-family="Liberation Sans">Canta</text>
<text x="1027" y="512" font-size="7.5" fill="#666" font-family="Liberation Sans">Arahuay</text>
<text x="1031" y="521" font-size="7.5" fill="#666" font-family="Liberation Sans">District</text>
<text x="985" y="525" font-size="7.5" fill="#666" font-family="Liberation Sans">de Quives</text>
<text x="990" y="534" font-size="7.5" fill="#666" font-family="Liberation Sans">District</text>
<text x="916" y="522" font-size="7.5" fill="#555" font-family="Liberation Sans">Cocayalta</text>
<text x="893" y="537" font-size="7.5" fill="#555" font-family="Liberation Sans">Huanchipuquio</text>
<text x="839" y="519" font-size="8" fill="#3a9a5a" font-family="Liberation Sans">Reservada</text>
<text x="842" y="530" font-size="8" fill="#3a9a5a" font-family="Liberation Sans">Lomas de</text>
<text x="848" y="541" font-size="8" fill="#3a9a5a" font-family="Liberation Sans">Ancon</text>
<text x="829" y="556" font-size="7.5" fill="#555" font-family="Liberation Sans">ancon</text>
<text x="1003" y="573" font-size="7.5" fill="#666" font-family="Liberation Sans">Jicamarca</text>
<text x="958" y="584" font-size="8.5" fill="#8a8aa0" font-family="Liberation Sans">San Antonio</text>
<text x="873" y="657" font-size="9" fill="#777" font-family="Liberation Sans">San Juan de</text>
<text x="875" y="668" font-size="9" fill="#777" font-family="Liberation Sans">Lurigancho</text>
<text x="975" y="658" font-size="8.5" fill="#8a8aa0" font-family="Liberation Sans">Chaclacayo</text>
<text x="1020" y="671" font-size="7.5" fill="#555" font-family="Liberation Sans">Nieve Nieve</text>
<text x="1138" y="677" font-size="7.5" fill="#555" font-family="Liberation Sans">San Damian</text>
<text x="1145" y="686" font-size="7.5" fill="#555" font-family="Liberation Sans">District</text>
<text x="1096" y="690" font-size="7.5" fill="#555" font-family="Liberation Sans">Antioquia</text>
<text x="1243" y="502" font-size="8" fill="#555" font-family="Liberation Sans">Morococha</text>
<text x="1273" y="514" font-size="7.5" fill="#555" font-family="Liberation Sans">Mahr Tu</text>
<text x="1240" y="523" font-size="7.5" fill="#555" font-family="Liberation Sans">Yauli District</text>
<text x="1270" y="546" font-size="7.5" fill="#555" font-family="Liberation Sans">San Cristo</text>
<text x="1270" y="622" font-size="9" fill="#8aa0a0" font-family="Liberation Sans">Tukuma</text>
<text x="1247" y="638" font-size="9" fill="#2a9a5a" font-family="Liberation Sans">Colquepucro</text>
<text x="870" y="683" font-size="10" fill="#888" font-family="Liberation Sans">Lima</text>
<text x="1205" y="520" font-size="8" fill="#8a8aa0" font-family="Liberation Sans">Casapalca</text>
<text x="1180" y="575" font-size="8" fill="#8a8aa0" font-family="Liberation Sans">Huarochiri</text>
<text x="1055" y="626" font-size="8" fill="#8a8aa0" font-family="Liberation Sans">San Bartolome</text>
<text x="1150" y="590" font-size="8" fill="#8a8aa0" font-family="Liberation Sans">Matucana</text>
<path d="M893.8 673.3 L838.0 675.0" stroke="#111" stroke-width="0.9"/>
<polygon points="862.9,674.2 868.8,671.8 869.0,676.3" fill="#000"/>
<path d="M932.8 663.6 L893.8 673.3" stroke="#111" stroke-width="0.9"/>
<polygon points="910.4,669.2 915.7,665.5 916.8,669.9" fill="#000"/>
<path d="M912.0 626.7 L893.8 673.3" stroke="#111" stroke-width="0.9"/>
<polygon points="901.8,652.8 901.9,646.4 906.1,648.0" fill="#000"/>
<path d="M947.6 636.4 L932.8 663.6" stroke="#111" stroke-width="0.9"/>
<polygon points="938.8,652.6 939.7,646.3 943.6,648.4" fill="#000"/>
<path d="M988.3 565.3 L947.6 636.4" stroke="#111" stroke-width="0.9"/>
<polygon points="966.5,603.5 967.5,597.1 971.4,599.4" fill="#000"/>
<path d="M1023.0 594.9 L947.6 636.4" stroke="#111" stroke-width="0.9"/>
<polygon points="982.7,617.1 986.8,612.2 989.0,616.2" fill="#000"/>
<path d="M970.0 628.8 L947.6 636.4" stroke="#111" stroke-width="0.9"/>
<polygon points="956.0,633.6 960.9,629.5 962.4,633.8" fill="#000"/>
<path d="M956.1 656.4 L932.8 663.6" stroke="#111" stroke-width="0.9"/>
<polygon points="941.6,660.9 946.7,657.0 948.0,661.3" fill="#000"/>
<path d="M1038.7 623.7 L932.8 663.6" stroke="#111" stroke-width="0.9"/>
<polygon points="982.9,644.7 987.8,640.5 989.4,644.7" fill="#000"/>
<path d="M1062.0 546.2 L1038.7 623.7" stroke="#111" stroke-width="0.9"/>
<polygon points="1049.5,587.8 1049.1,581.4 1053.4,582.7" fill="#000"/>
<path d="M1076.9 555.5 L1062.0 546.2" stroke="#111" stroke-width="0.9"/>
<polygon points="1066.9,549.3 1073.2,550.5 1070.8,554.3" fill="#000"/>
<path d="M1062.0 546.2 L1038.5 550.4" stroke="#111" stroke-width="0.9"/>
<polygon points="1047.3,548.8 1052.8,545.6 1053.6,550.0" fill="#000"/>
<path d="M1102.3 516.9 L1062.0 546.2" stroke="#111" stroke-width="0.9"/>
<polygon points="1079.7,533.3 1083.3,528.0 1085.9,531.6" fill="#000"/>
<path d="M1084.0 539.5 L1062.0 546.2" stroke="#111" stroke-width="0.9"/>
<polygon points="1070.1,543.7 1075.2,539.8 1076.5,544.1" fill="#000"/>
<path d="M1107.1 459.2 L1102.3 516.9" stroke="#111" stroke-width="0.9"/>
<polygon points="1104.5,491.0 1102.7,484.9 1107.2,485.2" fill="#000"/>
<path d="M1131.8 454.7 L1107.1 459.2" stroke="#111" stroke-width="0.9"/>
<polygon points="1116.5,457.5 1122.0,454.2 1122.8,458.6" fill="#000"/>
<path d="M1107.1 459.2 L1086.5 466.0" stroke="#111" stroke-width="0.9"/>
<polygon points="1094.0,463.5 1098.9,459.5 1100.4,463.8" fill="#000"/>
<path d="M1159.5 480.5 L1102.3 516.9" stroke="#111" stroke-width="0.9"/>
<polygon points="1128.4,500.3 1132.2,495.2 1134.6,499.0" fill="#000"/>
<path d="M1160.7 516.5 L1102.3 516.9" stroke="#111" stroke-width="0.9"/>
<polygon points="1128.5,516.7 1134.5,514.4 1134.5,518.9" fill="#000"/>
<path d="M1102.3 516.9 L1129.3 531.3" stroke="#111" stroke-width="0.9"/>
<polygon points="1118.4,525.5 1112.1,524.7 1114.2,520.7" fill="#000"/>
<path d="M1129.3 531.3 L1152.4 523.7" stroke="#111" stroke-width="0.9"/>
<polygon points="1143.7,526.6 1138.7,530.6 1137.3,526.3" fill="#000"/>
<path d="M1070.9 617.4 L1038.7 623.7" stroke="#111" stroke-width="0.9"/>
<polygon points="1051.9,621.1 1057.3,617.8 1058.2,622.2" fill="#000"/>
<path d="M1091.7 607.6 L1070.9 617.4" stroke="#111" stroke-width="0.9"/>
<polygon points="1078.6,613.8 1083.1,609.2 1085.0,613.3" fill="#000"/>
<path d="M1114.1 600.0 L1091.7 607.6" stroke="#111" stroke-width="0.9"/>
<polygon points="1100.1,604.8 1105.0,600.7 1106.5,605.0" fill="#000"/>
<path d="M1170.5 578.0 L1114.1 600.0" stroke="#111" stroke-width="0.9"/>
<polygon points="1139.5,590.1 1144.3,585.8 1145.9,590.0" fill="#000"/>
<path d="M1208.6 541.1 L1170.5 578.0" stroke="#111" stroke-width="0.9"/>
<polygon points="1187.4,561.6 1190.1,555.8 1193.3,559.1" fill="#000"/>
<path d="M1223.5 499.6 L1208.6 541.1" stroke="#111" stroke-width="0.9"/>
<polygon points="1215.0,523.2 1214.9,516.8 1219.2,518.3" fill="#000"/>
<path d="M1208.6 541.1 L1230.7 533.9" stroke="#111" stroke-width="0.9"/>
<polygon points="1222.5,536.6 1217.5,540.6 1216.1,536.3" fill="#000"/>
<path d="M1263.3 595.8 L1208.6 541.1" stroke="#111" stroke-width="0.9"/>
<polygon points="1233.8,566.3 1239.7,569.0 1236.5,572.2" fill="#000"/>
<path d="M1286.6 588.6 L1263.3 595.8" stroke="#111" stroke-width="0.9"/>
<polygon points="1272.1,593.1 1277.2,589.2 1278.5,593.5" fill="#000"/>
<path d="M1263.3 595.8 L1240.4 600.0" stroke="#111" stroke-width="0.9"/>
<polygon points="1248.9,598.4 1254.4,595.1 1255.2,599.6" fill="#000"/>
<path d="M1224.3 583.5 L1170.5 578.0" stroke="#111" stroke-width="0.9"/>
<polygon points="1194.4,580.4 1200.6,578.8 1200.2,583.3" fill="#000"/>
<path d="M1192.1 565.3 L1170.5 578.0" stroke="#111" stroke-width="0.9"/>
<polygon points="1178.7,573.2 1182.7,568.2 1185.0,572.1" fill="#000"/>
<path d="M1122.5 488.0 L1117.4 509.7" stroke="#111" stroke-width="0.9"/>
<polygon points="1119.3,501.8 1118.4,495.4 1122.8,496.4" fill="#000"/>
<path d="M1086.5 466.0 L1107.1 459.2" stroke="#111" stroke-width="0.9"/>
<polygon points="1099.6,461.7 1094.7,465.7 1093.2,461.4" fill="#000"/>
<path d="M1047.2 620.3 L1038.7 623.7" stroke="#111" stroke-width="0.9"/>
<polygon points="1040.2,623.1 1044.9,618.8 1046.6,623.0" fill="#000"/>
<text x="1096" y="442.4" font-size="8.6" fill="#111" stroke="#111" stroke-width="0.25" font-family="Liberation Sans" filter="url(#halo)" textLength="34" lengthAdjust="spacingAndGlyphs">309120900</text>
<text x="1114.1" y="451.7" font-size="8.6" fill="#111" stroke="#111" stroke-width="0.25" font-family="Liberation Sans" filter="url(#halo)" textLength="34" lengthAdjust="spacingAndGlyphs">309121000</text>
<text x="1084.5" y="484.7" font-size="8.6" fill="#111" stroke="#111" stroke-width="0.25" font-family="Liberation Sans" filter="url(#halo)" textLength="34" lengthAdjust="spacingAndGlyphs">309174700</text>
<text x="1143.8" y="478.4" font-size="8.6" fill="#111" stroke="#111" stroke-width="0.25" font-family="Liberation Sans" filter="url(#halo)" textLength="34" lengthAdjust="spacingAndGlyphs">309170200</text>
<text x="1146.8" y="512.3" font-size="8.6" fill="#111" stroke="#111" stroke-width="0.25" font-family="Liberation Sans" filter="url(#halo)" textLength="34" lengthAdjust="spacingAndGlyphs">309178600</text>
<text x="1062" y="522.9" font-size="8.6" fill="#111" stroke="#111" stroke-width="0.25" font-family="Liberation Sans" filter="url(#halo)" textLength="34" lengthAdjust="spacingAndGlyphs">309211900</text>
<text x="1112.9" y="537.7" font-size="8.6" fill="#111" stroke="#111" stroke-width="0.25" font-family="Liberation Sans" filter="url(#halo)" textLength="34" lengthAdjust="spacingAndGlyphs">309195200</text>
<text x="1078.1" y="553.4" font-size="8.6" fill="#111" stroke="#111" stroke-width="0.25" font-family="Liberation Sans" filter="url(#halo)" textLength="34" lengthAdjust="spacingAndGlyphs">309220100</text>
<text x="1039.1" y="580.1" font-size="8.6" fill="#111" stroke="#111" stroke-width="0.25" font-family="Liberation Sans" filter="url(#halo)" textLength="34" lengthAdjust="spacingAndGlyphs">309297700</text>
<text x="1084.5" y="587.7" font-size="8.6" fill="#111" stroke="#111" stroke-width="0.25" font-family="Liberation Sans" filter="url(#halo)" textLength="34" lengthAdjust="spacingAndGlyphs">309289200</text>
<text x="1116.3" y="608.5" font-size="8.6" fill="#111" stroke="#111" stroke-width="0.25" font-family="Liberation Sans" filter="url(#halo)" textLength="34" lengthAdjust="spacingAndGlyphs">309295900</text>
<text x="1048.5" y="626.7" font-size="8.6" fill="#111" stroke="#111" stroke-width="0.25" font-family="Liberation Sans" filter="url(#halo)" textLength="34" lengthAdjust="spacingAndGlyphs">309298400</text>
<text x="959.9" y="586.4" font-size="8.6" fill="#111" stroke="#111" stroke-width="0.25" font-family="Liberation Sans" filter="url(#halo)" textLength="34" lengthAdjust="spacingAndGlyphs">309311000</text>
<text x="984.9" y="602.5" font-size="8.6" fill="#111" stroke="#111" stroke-width="0.25" font-family="Liberation Sans" filter="url(#halo)" textLength="34" lengthAdjust="spacingAndGlyphs">309311100</text>
<text x="893.8" y="633.9" font-size="8.6" fill="#111" stroke="#111" stroke-width="0.25" font-family="Liberation Sans" filter="url(#halo)" textLength="34" lengthAdjust="spacingAndGlyphs">309349700</text>
<text x="917.9" y="646.6" font-size="8.6" fill="#111" stroke="#111" stroke-width="0.25" font-family="Liberation Sans" filter="url(#halo)" textLength="34" lengthAdjust="spacingAndGlyphs">309339900</text>
<text x="978.5" y="647" font-size="8.6" fill="#111" stroke="#111" stroke-width="0.25" font-family="Liberation Sans" filter="url(#halo)" textLength="34" lengthAdjust="spacingAndGlyphs">309340000</text>
<text x="912.9" y="671.2" font-size="8.6" fill="#111" stroke="#111" stroke-width="0.25" font-family="Liberation Sans" filter="url(#halo)" textLength="34" lengthAdjust="spacingAndGlyphs">309348500</text>
<text x="849.3" y="671.2" font-size="8.6" fill="#111" stroke="#111" stroke-width="0.25" font-family="Liberation Sans" filter="url(#halo)" textLength="34" lengthAdjust="spacingAndGlyphs">309352600</text>
<text x="1177.7" y="544.9" font-size="8.6" fill="#111" stroke="#111" stroke-width="0.25" font-family="Liberation Sans" filter="url(#halo)" textLength="34" lengthAdjust="spacingAndGlyphs">309224600</text>
<text x="1169.2" y="574.6" font-size="8.6" fill="#111" stroke="#111" stroke-width="0.25" font-family="Liberation Sans" filter="url(#halo)" textLength="34" lengthAdjust="spacingAndGlyphs">309243500</text>
<text x="1204.4" y="588.6" font-size="8.6" fill="#111" stroke="#111" stroke-width="0.25" font-family="Liberation Sans" filter="url(#halo)" textLength="34" lengthAdjust="spacingAndGlyphs">309261700</text>
<text x="1234.9" y="578" font-size="8.6" fill="#111" stroke="#111" stroke-width="0.25" font-family="Liberation Sans" filter="url(#halo)" textLength="34" lengthAdjust="spacingAndGlyphs">309265000</text>
<text x="1201" y="502.5" font-size="8.6" fill="#111" stroke="#111" stroke-width="0.25" font-family="Liberation Sans" filter="url(#halo)" textLength="34" lengthAdjust="spacingAndGlyphs">309240900</text>
<text x="1112" y="515" font-size="8.6" fill="#111" stroke="#111" stroke-width="0.25" font-family="Liberation Sans" filter="url(#halo)" textLength="34" lengthAdjust="spacingAndGlyphs">309241000</text>
<rect x="966.2" y="625.0" width="7.6" height="7.6" fill="#ff00ff" stroke="#3a003a" stroke-width="0.7"/>
<rect x="952.3" y="652.6" width="7.6" height="7.6" fill="#ff00ff" stroke="#3a003a" stroke-width="0.7"/>
<rect x="906.9" y="663.2" width="7.6" height="7.6" fill="#ff00ff" stroke="#3a003a" stroke-width="0.7"/>
<rect x="913.3" y="661.5" width="7.6" height="7.6" fill="#ff00ff" stroke="#3a003a" stroke-width="0.7"/>
<rect x="929.0" y="665.2" width="7.6" height="7.6" fill="#ff00ff" stroke="#3a003a" stroke-width="0.7"/>
<rect x="1012.0" y="623.7" width="7.6" height="7.6" fill="#ff00ff" stroke="#3a003a" stroke-width="0.7"/>
<rect x="1034.9" y="626.3" width="7.6" height="7.6" fill="#ff00ff" stroke="#3a003a" stroke-width="0.7"/>
<rect x="1043.4" y="616.5" width="7.6" height="7.6" fill="#ff00ff" stroke="#3a003a" stroke-width="0.7"/>
<rect x="1057.4" y="613.2" width="7.6" height="7.6" fill="#ff00ff" stroke="#3a003a" stroke-width="0.7"/>
<rect x="1064.6" y="606.8" width="7.6" height="7.6" fill="#ff00ff" stroke="#3a003a" stroke-width="0.7"/>
<rect x="1089.1" y="605.1" width="7.6" height="7.6" fill="#ff00ff" stroke="#3a003a" stroke-width="0.7"/>
<rect x="1110.3" y="596.2" width="7.6" height="7.6" fill="#ff00ff" stroke="#3a003a" stroke-width="0.7"/>
<rect x="1034.7" y="546.6" width="7.6" height="7.6" fill="#ff00ff" stroke="#3a003a" stroke-width="0.7"/>
<rect x="1049.7" y="555.1" width="7.6" height="7.6" fill="#ff00ff" stroke="#3a003a" stroke-width="0.7"/>
<rect x="1058.0" y="548.7" width="7.6" height="7.6" fill="#ff00ff" stroke="#3a003a" stroke-width="0.7"/>
<rect x="1073.1" y="557.2" width="7.6" height="7.6" fill="#ff00ff" stroke="#3a003a" stroke-width="0.7"/>
<rect x="1080.2" y="535.7" width="7.6" height="7.6" fill="#ff00ff" stroke="#3a003a" stroke-width="0.7"/>
<rect x="1095.0" y="543.6" width="7.6" height="7.6" fill="#ff00ff" stroke="#3a003a" stroke-width="0.7"/>
<rect x="1075.5" y="516.2" width="7.6" height="7.6" fill="#ff00ff" stroke="#3a003a" stroke-width="0.7"/>
<rect x="1148.6" y="519.9" width="7.6" height="7.6" fill="#ff00ff" stroke="#3a003a" stroke-width="0.7"/>
<rect x="1123.9" y="501.3" width="7.6" height="7.6" fill="#ff00ff" stroke="#3a003a" stroke-width="0.7"/>
<rect x="1120.8" y="504.8" width="7.6" height="7.6" fill="#ff00ff" stroke="#3a003a" stroke-width="0.7"/>
<rect x="1082.7" y="462.2" width="7.6" height="7.6" fill="#ff00ff" stroke="#3a003a" stroke-width="0.7"/>
<rect x="1128.0" y="450.9" width="7.6" height="7.6" fill="#ff00ff" stroke="#3a003a" stroke-width="0.7"/>
<rect x="1143.0" y="567.8" width="7.6" height="7.6" fill="#ff00ff" stroke="#3a003a" stroke-width="0.7"/>
<rect x="1144.2" y="577.6" width="7.6" height="7.6" fill="#ff00ff" stroke="#3a003a" stroke-width="0.7"/>
<rect x="1163.7" y="564.8" width="7.6" height="7.6" fill="#ff00ff" stroke="#3a003a" stroke-width="0.7"/>
<rect x="1167.5" y="579.7" width="7.6" height="7.6" fill="#ff00ff" stroke="#3a003a" stroke-width="0.7"/>
<rect x="1187.5" y="555.9" width="7.6" height="7.6" fill="#ff00ff" stroke="#3a003a" stroke-width="0.7"/>
<rect x="1190.0" y="565.7" width="7.6" height="7.6" fill="#ff00ff" stroke="#3a003a" stroke-width="0.7"/>
<rect x="1198.0" y="583.5" width="7.6" height="7.6" fill="#ff00ff" stroke="#3a003a" stroke-width="0.7"/>
<rect x="1220.5" y="585.6" width="7.6" height="7.6" fill="#ff00ff" stroke="#3a003a" stroke-width="0.7"/>
<rect x="1209.5" y="553.8" width="7.6" height="7.6" fill="#ff00ff" stroke="#3a003a" stroke-width="0.7"/>
<rect x="1226.9" y="530.1" width="7.6" height="7.6" fill="#ff00ff" stroke="#3a003a" stroke-width="0.7"/>
<rect x="1180.7" y="541.5" width="7.6" height="7.6" fill="#ff00ff" stroke="#3a003a" stroke-width="0.7"/>
<rect x="1203.6" y="543.2" width="7.6" height="7.6" fill="#ff00ff" stroke="#3a003a" stroke-width="0.7"/>
<rect x="1197.2" y="498.7" width="7.6" height="7.6" fill="#ff00ff" stroke="#3a003a" stroke-width="0.7"/>
<rect x="1220.5" y="500.9" width="7.6" height="7.6" fill="#ff00ff" stroke="#3a003a" stroke-width="0.7"/>
<rect x="1236.6" y="596.2" width="7.6" height="7.6" fill="#ff00ff" stroke="#3a003a" stroke-width="0.7"/>
<rect x="1259.5" y="598.7" width="7.6" height="7.6" fill="#ff00ff" stroke="#3a003a" stroke-width="0.7"/>
<rect x="1282.8" y="584.8" width="7.6" height="7.6" fill="#ff00ff" stroke="#3a003a" stroke-width="0.7"/>
<circle cx="988.3" cy="565.3" r="3.8" fill="#3b8ee6" stroke="#1a3a6a" stroke-width="0.7"/>
<circle cx="1023.0" cy="594.9" r="3.8" fill="#3b8ee6" stroke="#1a3a6a" stroke-width="0.7"/>
<circle cx="912.0" cy="626.7" r="3.8" fill="#3b8ee6" stroke="#1a3a6a" stroke-width="0.7"/>
<circle cx="947.6" cy="636.4" r="3.8" fill="#3b8ee6" stroke="#1a3a6a" stroke-width="0.7"/>
<circle cx="932.8" cy="663.6" r="3.8" fill="#3b8ee6" stroke="#1a3a6a" stroke-width="0.7"/>
<circle cx="893.8" cy="673.3" r="3.8" fill="#3b8ee6" stroke="#1a3a6a" stroke-width="0.7"/>
<circle cx="1062.0" cy="546.2" r="3.8" fill="#3b8ee6" stroke="#1a3a6a" stroke-width="0.7"/>
<circle cx="1076.9" cy="555.5" r="3.8" fill="#3b8ee6" stroke="#1a3a6a" stroke-width="0.7"/>
<circle cx="1038.7" cy="623.7" r="3.8" fill="#3b8ee6" stroke="#1a3a6a" stroke-width="0.7"/>
<circle cx="1070.9" cy="617.4" r="3.8" fill="#3b8ee6" stroke="#1a3a6a" stroke-width="0.7"/>
<circle cx="1091.7" cy="607.6" r="3.8" fill="#3b8ee6" stroke="#1a3a6a" stroke-width="0.7"/>
<circle cx="1107.1" cy="459.2" r="3.8" fill="#3b8ee6" stroke="#1a3a6a" stroke-width="0.7"/>
<circle cx="1110.2" cy="462.3" r="3.8" fill="#3b8ee6" stroke="#1a3a6a" stroke-width="0.7"/>
<circle cx="1112.2" cy="462.7" r="3.8" fill="#3b8ee6" stroke="#1a3a6a" stroke-width="0.7"/>
<circle cx="1122.5" cy="488.0" r="3.8" fill="#3b8ee6" stroke="#1a3a6a" stroke-width="0.7"/>
<circle cx="1159.5" cy="480.5" r="3.8" fill="#3b8ee6" stroke="#1a3a6a" stroke-width="0.7"/>
<circle cx="1102.3" cy="516.9" r="3.8" fill="#3b8ee6" stroke="#1a3a6a" stroke-width="0.7"/>
<circle cx="1117.4" cy="509.7" r="3.8" fill="#3b8ee6" stroke="#1a3a6a" stroke-width="0.7"/>
<circle cx="1123.6" cy="507.6" r="3.8" fill="#3b8ee6" stroke="#1a3a6a" stroke-width="0.7"/>
<circle cx="1160.7" cy="516.5" r="3.8" fill="#3b8ee6" stroke="#1a3a6a" stroke-width="0.7"/>
<circle cx="1129.3" cy="531.3" r="3.8" fill="#3b8ee6" stroke="#1a3a6a" stroke-width="0.7"/>
<circle cx="1223.5" cy="499.6" r="3.8" fill="#3b8ee6" stroke="#1a3a6a" stroke-width="0.7"/>
<circle cx="1208.6" cy="541.1" r="3.8" fill="#3b8ee6" stroke="#1a3a6a" stroke-width="0.7"/>
<circle cx="1170.5" cy="578.0" r="3.8" fill="#3b8ee6" stroke="#1a3a6a" stroke-width="0.7"/>
<circle cx="1192.1" cy="565.3" r="3.8" fill="#3b8ee6" stroke="#1a3a6a" stroke-width="0.7"/>
<circle cx="1224.3" cy="583.5" r="3.8" fill="#3b8ee6" stroke="#1a3a6a" stroke-width="0.7"/>
<circle cx="1263.3" cy="595.8" r="3.8" fill="#3b8ee6" stroke="#1a3a6a" stroke-width="0.7"/>
<rect x="834.5" y="671" width="7" height="7" fill="#00ff00" stroke="#003300" stroke-width="0.8"/>
<rect x="837" y="425" width="188.5" height="85" fill="#4472c4"/>
</g></svg>
<div style="position:absolute;left:829px;top:33px;width:246px;height:5px;background:#ff0000"></div>
<div style="position:absolute;left:1070px;top:33px;width:5px;height:101px;background:#ff0000"></div>
<svg style="position:absolute;left:0;top:0" width="1309" height="694"><polygon points="1066,133 1079.5,133 1073,146.5" fill="#ff0000"/><rect x="1072.5" y="382" width="13.5" height="22" fill="#ff0000"/><polygon points="1066,403 1093.5,403 1079.5,417" fill="#ff0000"/></svg>
<div class="t" style="left:847.0px;top:431.2px;font-size:15px;line-height:17px;color:#fff;transform:scaleX(0.9215);-webkit-text-stroke:0;">Creates demand nodes</div>
<div class="t" style="left:847.0px;top:449.5px;font-size:15px;line-height:17px;color:#fff;transform:scaleX(0.9485);-webkit-text-stroke:0;">aggregating water permits</div>
<div class="t" style="left:847.0px;top:467.8px;font-size:15px;line-height:17px;color:#fff;transform:scaleX(0.9385);-webkit-text-stroke:0;">by three categories of use</div>
<div class="t" style="left:847.0px;top:486.1px;font-size:15px;line-height:17px;color:#fff;transform:scaleX(0.9133);-webkit-text-stroke:0;">and by COMID</div>
</body></html>
